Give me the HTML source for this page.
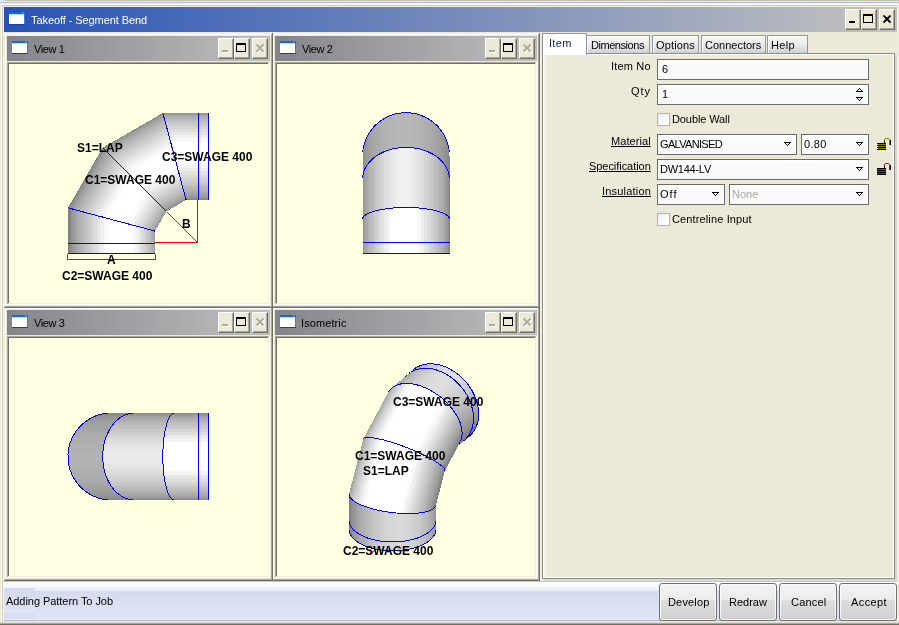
<!DOCTYPE html>
<html><head><meta charset="utf-8"><title>Takeoff - Segment Bend</title>
<style>
html,body{margin:0;padding:0}
body{width:899px;height:625px;overflow:hidden;position:relative;background:#ece9d8;font-family:"Liberation Sans",sans-serif;font-size:11px;color:#000}
body>div,body>span,body>svg{position:absolute;display:block}
.t{white-space:nowrap;height:13px;line-height:13px;font-size:11px;will-change:transform}
.u{text-decoration:underline}
.cb{box-sizing:border-box;background:#ece9d8;border:1px solid;border-color:#fff #716f64 #716f64 #fff;box-shadow:inset -1px -1px 0 #aca899}
.fld{box-sizing:border-box;border:1px solid #6a6a6a;background:linear-gradient(#fff 0,#fff 1px,#fafafa 2px,#fafafa 100%)}
.sb{box-sizing:border-box;border:1px solid #707070;border-radius:3px;background:linear-gradient(#f2f2f2 0%,#ebebeb 45%,#dddddd 46%,#cfcfcf 100%);box-shadow:inset 0 0 0 1px #fafafa}
</style></head>
<body>
<div style="left:0px;top:0px;width:899px;height:625px;background:#ece9d8;"></div>
<div style="left:0px;top:0px;width:5px;height:3px;background:#dfe3f3;"></div>
<div style="left:5px;top:0px;width:894px;height:1px;background:#c5c1b1;"></div>
<div style="left:0px;top:1px;width:899px;height:1px;background:#e4e8f6;"></div>
<div style="left:0px;top:2px;width:899px;height:1px;background:#b4bcd8;"></div>
<div style="left:0px;top:3px;width:899px;height:1px;background:#f4f2e6;"></div>
<div style="left:1px;top:4px;width:898px;height:1px;background:#fff;"></div>
<div style="left:1px;top:4px;width:1px;height:617px;background:#fff;"></div>
<div style="left:2px;top:5px;width:897px;height:1px;background:#c8c5b5;"></div>
<div style="left:2px;top:5px;width:1px;height:616px;background:#d0ccbc;"></div>
<div style="left:3px;top:6px;width:896px;height:1px;background:#f5f2e0;"></div>
<div style="left:3px;top:6px;width:1px;height:615px;background:#f5f2e0;"></div>
<div style="left:897px;top:5px;width:1px;height:616px;background:#f5f2e0;"></div>
<div style="left:898px;top:3px;width:1px;height:618px;background:#ece9d8;"></div>
<div style="left:4px;top:7px;width:893px;height:25px;background:linear-gradient(to right,#2752b6 0%,#c0c0c0 97%);"></div>
<svg style="left:9px;top:12px" width="16" height="13" viewBox="0 0 16 13" shape-rendering="crispEdges"><rect x="0" y="0" width="16" height="13" fill="#fffffb"/><rect x="0" y="0" width="16" height="2" fill="#0a6cdc"/><rect x="0" y="2" width="16" height="1" fill="#c8dcf4"/><rect x="13" y="1" width="1" height="1" fill="#f06c28"/><rect x="13" y="0" width="2" height="1" fill="#4890e0"/><rect x="15" y="2" width="1" height="10" fill="#3c7cd8"/><rect x="0" y="12" width="16" height="1" fill="#1444a4"/></svg>
<span class="t" style="left:31px;top:14px;letter-spacing:-0.08px;color:#fff">Takeoff - Segment Bend</span>
<div class="cb" style="left:845px;top:9px;width:16px;height:21px"></div>
<div style="left:849px;top:21px;width:6px;height:2px;background:#000;"></div>
<div class="cb" style="left:861px;top:9px;width:16px;height:21px"></div>
<div style="left:863px;top:14px;width:10px;height:9px;box-sizing:border-box;border:1px solid #000;border-top-width:2px"></div>
<div class="cb" style="left:879px;top:9px;width:16px;height:21px"></div>
<svg style="left:883px;top:15px" width="10" height="10" viewBox="0 0 10 10"><path d="M0.5 0.5 L7.5 7.5 M7.5 0.5 L0.5 7.5" stroke="#000" stroke-width="1.9"/></svg>
<div style="left:272px;top:307px;width:268px;height:274px;background:#ece9d8;"></div>
<div style="left:272px;top:307px;width:268px;height:1px;background:#f1efe2;"></div>
<div style="left:272px;top:307px;width:1px;height:274px;background:#f1efe2;"></div>
<div style="left:273px;top:308px;width:266px;height:1px;background:#fff;"></div>
<div style="left:273px;top:308px;width:1px;height:272px;background:#fff;"></div>
<div style="left:538px;top:308px;width:1px;height:272px;background:#aca899;"></div>
<div style="left:273px;top:579px;width:266px;height:1px;background:#aca899;"></div>
<div style="left:539px;top:307px;width:1px;height:274px;background:#716f64;"></div>
<div style="left:272px;top:580px;width:268px;height:1px;background:#716f64;"></div>
<div style="left:275px;top:310px;width:262px;height:25px;background:linear-gradient(to right,#84848c 0%,#c0c0c0 100%);"></div>
<svg style="left:280px;top:315px" width="16" height="13" viewBox="0 0 16 13" shape-rendering="crispEdges"><rect x="0" y="0" width="16" height="13" fill="#fffffb"/><rect x="0" y="0" width="16" height="2" fill="#0a6cdc"/><rect x="0" y="2" width="16" height="1" fill="#c8dcf4"/><rect x="13" y="1" width="1" height="1" fill="#f06c28"/><rect x="13" y="0" width="2" height="1" fill="#4890e0"/><rect x="15" y="2" width="1" height="10" fill="#3c7cd8"/><rect x="0" y="12" width="16" height="1" fill="#1444a4"/></svg>
<span class="t" style="left:301px;top:317px;letter-spacing:0.1px;">Isometric</span>
<div class="cb" style="left:485px;top:312px;width:16px;height:21px"></div>
<div style="left:490px;top:325px;width:6px;height:2px;background:#fff;"></div>
<div style="left:489px;top:324px;width:6px;height:2px;background:#aca899;"></div>
<div class="cb" style="left:501px;top:312px;width:16px;height:21px"></div>
<div style="left:503px;top:317px;width:10px;height:9px;box-sizing:border-box;border:1px solid #000;border-top-width:2px"></div>
<div class="cb" style="left:519px;top:312px;width:16px;height:21px"></div>
<svg style="left:523px;top:318px" width="10" height="10" viewBox="0 0 10 10"><path d="M1.5 1.5 L8.5 8.5 M8.5 1.5 L1.5 8.5" stroke="#fff" stroke-width="1.8"/><path d="M0.5 0.5 L7.5 7.5 M7.5 0.5 L0.5 7.5" stroke="#aca899" stroke-width="1.9"/></svg>
<div style="left:275px;top:336px;width:262px;height:242px;background:#ffffe1;"></div>
<div style="left:275px;top:336px;width:262px;height:1px;background:#aca899;"></div>
<div style="left:275px;top:336px;width:1px;height:242px;background:#aca899;"></div>
<div style="left:276px;top:337px;width:260px;height:1px;background:#716f64;"></div>
<div style="left:276px;top:337px;width:1px;height:240px;background:#716f64;"></div>
<div style="left:535px;top:337px;width:1px;height:240px;background:#f1efe2;"></div>
<div style="left:276px;top:576px;width:260px;height:1px;background:#f1efe2;"></div>
<div style="left:536px;top:336px;width:1px;height:242px;background:#fff;"></div>
<div style="left:275px;top:577px;width:262px;height:1px;background:#fff;"></div>
<svg style="left:277px;top:338px;will-change:transform" width="258" height="238" viewBox="277 338 258 238" shape-rendering="crispEdges" text-rendering="optimizeSpeed" font-family="Liberation Sans, sans-serif" font-weight="bold" font-size="12"><path fill="#808080" d="M465 439.5L463.2 441.4L469.9 435.6L471.9 433.6Z"/><path fill="#9d9d9d" d="M401.8 379.5L403.8 377.9L414.4 368.7L412.1 370.5Z"/><path fill="#808080" d="M466.6 437.4L465 439.5L471.9 433.6L473.6 431.3Z"/><path fill="#a4a4a4" d="M403.8 377.9L406 376.5L416.8 367.2L414.4 368.7Z"/><path fill="#808080" d="M467.9 435.1L466.6 437.4L473.6 431.3L475.1 428.8Z"/><path fill="#aaaaaa" d="M406 376.5L408.5 375.4L419.4 366L416.8 367.2Z"/><path fill="#808080" d="M468.9 432.7L467.9 435.1L475.1 428.8L476.4 426.2Z"/><path fill="#b0b0b0" d="M408.5 375.4L411.1 374.6L422.2 365L419.4 366Z"/><path fill="#808080" d="M458.2 445.4L456.6 447.1L463.2 441.4L465 439.5Z"/><path fill="#828282" d="M469.6 430L468.9 432.7L476.4 426.2L477.4 423.3Z"/><path fill="#b7b7b7" d="M411.1 374.6L413.9 374L425.1 364.3L422.2 365Z"/><path fill="#898989" d="M470.1 427.2L469.6 430L477.4 423.3L478.1 420.3Z"/><path fill="#808080" d="M459.5 443.5L458.2 445.4L465 439.5L466.6 437.4Z"/><path fill="#bdbdbd" d="M413.9 374L416.9 373.7L428.1 363.9L425.1 364.3Z"/><path fill="#8f8f8f" d="M470.3 424.3L470.1 427.2L478.1 420.3L478.5 417.2Z"/><path fill="#808080" d="M460.6 441.4L459.5 443.5L466.6 437.4L467.9 435.1Z"/><path fill="#c3c3c3" d="M416.9 373.7L419.9 373.7L431.2 363.9L428.1 363.9Z"/><path fill="#969696" d="M470.2 421.3L470.3 424.3L478.5 417.2L478.7 413.9Z"/><path fill="#9d9d9d" d="M391.4 388.5L393.2 387L403.8 377.9L401.8 379.5Z"/><path fill="#c9c9c9" d="M419.9 373.7L423.1 373.9L434.5 364.1L431.2 363.9Z"/><path fill="#808080" d="M461.4 439.2L460.6 441.4L467.9 435.1L468.9 432.7Z"/><path fill="#9c9c9c" d="M469.8 418.2L470.2 421.3L478.7 413.9L478.5 410.6Z"/><path fill="#a4a4a4" d="M393.2 387L395.3 385.8L406 376.5L403.8 377.9Z"/><path fill="#cfcfcf" d="M423.1 373.9L426.3 374.5L437.7 364.6L434.5 364.1Z"/><path fill="#a3a3a3" d="M469.1 415L469.8 418.2L478.5 410.6L478.1 407.2Z"/><path fill="#828282" d="M461.9 436.7L461.4 439.2L468.9 432.7L469.6 430Z"/><path fill="#d3d3d3" d="M426.3 374.5L429.6 375.3L441 365.4L437.7 364.6Z"/><path fill="#8d8d8d" d="M435.8 531L436 529.1L436 516.8L435.8 518.4Z"/><path fill="#a9a9a9" d="M468.1 411.8L469.1 415L478.1 407.2L477.4 403.8Z"/><path fill="#aaaaaa" d="M395.3 385.8L397.6 384.8L408.5 375.4L406 376.5Z"/><path fill="#808080" d="M349 529.1L349.2 531L349.2 513.3L349 511.8Z"/><path fill="#d8d8d8" d="M429.6 375.3L432.9 376.4L444.3 366.5L441 365.4Z"/><path fill="#898989" d="M462.1 434.2L461.9 436.7L469.6 430L470.1 427.2Z"/><path fill="#b0b0b0" d="M466.9 408.6L468.1 411.8L477.4 403.8L476.4 400.4Z"/><path fill="#808080" d="M452.7 456.1L452.1 457.4L459.5 443.5L460.6 441.4Z"/><path fill="#9e9e9e" d="M375.9 415.4L376.9 414.2L389.8 390.2L388.4 392.1Z"/><path fill="#dbdbdb" d="M432.9 376.4L436.2 377.7L447.5 367.8L444.3 366.5Z"/><path fill="#939393" d="M435.3 532.8L435.8 531L435.8 518.4L435.3 519.8Z"/><path fill="#b0b0b0" d="M397.6 384.8L400.1 384.1L411.1 374.6L408.5 375.4Z"/><path fill="#b6b6b6" d="M465.4 405.4L466.9 408.6L476.4 400.4L475.1 397Z"/><path fill="#dddddd" d="M436.2 377.7L439.4 379.3L450.8 369.5L447.5 367.8Z"/><path fill="#8f8f8f" d="M462 431.5L462.1 434.2L470.1 427.2L470.3 424.3Z"/><path fill="#bcbcbc" d="M463.7 402.3L465.4 405.4L475.1 397L473.6 393.6Z"/><path fill="#808080" d="M349.2 531L349.7 532.8L349.7 514.9L349.2 513.3Z"/><path fill="#dedede" d="M439.4 379.3L442.6 381.1L453.9 371.4L450.8 369.5Z"/><path fill="#808080" d="M453.1 454.6L452.7 456.1L460.6 441.4L461.4 439.2Z"/><path fill="#c3c3c3" d="M461.7 399.2L463.7 402.3L473.6 393.6L471.9 390.4Z"/><path fill="#a7a7a7" d="M376.9 414.2L378.2 413.2L391.4 388.5L389.8 390.2Z"/><path fill="#b7b7b7" d="M400.1 384.1L402.8 383.6L413.9 374L411.1 374.6Z"/><path fill="#dedede" d="M442.6 381.1L445.8 383.2L456.9 373.5L453.9 371.4Z"/><path fill="#c9c9c9" d="M459.5 396.2L461.7 399.2L471.9 390.4L469.9 387.2Z"/><path fill="#999999" d="M434.5 534.7L435.3 532.8L435.3 519.8L434.5 521.3Z"/><path fill="#dddddd" d="M445.8 383.2L448.8 385.4L459.8 375.9L456.9 373.5Z"/><path fill="#cecece" d="M457.1 393.3L459.5 396.2L469.9 387.2L467.6 384.1Z"/><path fill="#8d8d8d" d="M435.8 518.4L436 516.8L436 504.6L435.8 505.7Z"/><path fill="#dadada" d="M448.8 385.4L451.7 387.9L462.6 378.4L459.8 375.9Z"/><path fill="#969696" d="M461.7 428.7L462 431.5L470.3 424.3L470.2 421.3Z"/><path fill="#d3d3d3" d="M454.5 390.5L457.1 393.3L467.6 384.1L465.2 381.2Z"/><path fill="#d7d7d7" d="M451.7 387.9L454.5 390.5L465.2 381.2L462.6 378.4Z"/><path fill="#858585" d="M349.7 532.8L350.5 534.7L350.5 516.4L349.7 514.9Z"/><path fill="#bdbdbd" d="M402.8 383.6L405.6 383.4L416.9 373.7L413.9 374Z"/><path fill="#808080" d="M453.2 452.9L453.1 454.6L461.4 439.2L461.9 436.7Z"/><path fill="#b0b0b0" d="M378.2 413.2L379.7 412.3L393.2 387L391.4 388.5Z"/><path fill="#808080" d="M444.9 470.7L444.6 471.4L452.1 457.4L452.7 456.1Z"/><path fill="#9c9c9c" d="M461 425.8L461.7 428.7L470.2 421.3L469.8 418.2Z"/><path fill="#a0a0a0" d="M433.4 536.5L434.5 534.7L434.5 521.3L433.4 522.6Z"/><path fill="#939393" d="M435.3 519.8L435.8 518.4L435.8 505.7L435.3 506.8Z"/><path fill="#c3c3c3" d="M405.6 383.4L408.6 383.5L419.9 373.7L416.9 373.7Z"/><path fill="#8b8b8b" d="M350.5 534.7L351.6 536.5L351.6 517.9L350.5 516.4Z"/><path fill="#808080" d="M349 511.8L349.2 513.3L349.2 495.7L349 494.5Z"/><path fill="#848484" d="M453 451.2L453.2 452.9L461.9 436.7L462.1 434.2Z"/><path fill="#a3a3a3" d="M460.1 422.8L461 425.8L469.8 418.2L469.1 415Z"/><path fill="#bababa" d="M379.7 412.3L381.5 411.7L395.3 385.8L393.2 387Z"/><path fill="#808080" d="M444.9 470L444.9 470.7L452.7 456.1L453.1 454.6Z"/><path fill="#c9c9c9" d="M408.6 383.5L411.7 383.8L423.1 373.9L419.9 373.7Z"/><path fill="#a6a6a6" d="M431.9 538.3L433.4 536.5L433.4 522.6L431.9 524Z"/><path fill="#959595" d="M349.2 493.4L349 494.5L356.2 466.6L356.2 466.4Z"/><path fill="#9e9e9e" d="M363.4 438.7L364 438.2L376.9 414.2L375.9 415.4Z"/><path fill="#a9a9a9" d="M458.9 419.9L460.1 422.8L469.1 415L468.1 411.8Z"/><path fill="#999999" d="M434.5 521.3L435.3 519.8L435.3 506.8L434.5 507.8Z"/><path fill="#929292" d="M351.6 536.5L353.1 538.3L353.1 519.4L351.6 517.9Z"/><path fill="#808080" d="M435.3 506.8L435.8 505.7L440.4 488.2L440.1 488.4Z"/><path fill="#8c8c8c" d="M452.5 449.3L453 451.2L462.1 434.2L462 431.5Z"/><path fill="#808080" d="M349.2 513.3L349.7 514.9L349.7 496.9L349.2 495.7Z"/><path fill="#c4c4c4" d="M381.5 411.7L383.5 411.2L397.6 384.8L395.3 385.8Z"/><path fill="#cfcfcf" d="M411.7 383.8L414.9 384.4L426.3 374.5L423.1 373.9Z"/><path fill="#959595" d="M356.2 466.4L356.2 466.6L363.4 438.7L363.2 439.4Z"/><path fill="#808080" d="M440.1 488.4L440.4 488.2L444.9 470.7L444.9 470Z"/><path fill="#b0b0b0" d="M457.4 416.9L458.9 419.9L468.1 411.8L466.9 408.6Z"/><path fill="#acacac" d="M430.2 539.9L431.9 538.3L431.9 524L430.2 525.2Z"/><path fill="#808080" d="M444.5 469.1L444.9 470L453.1 454.6L453.2 452.9Z"/><path fill="#d3d3d3" d="M414.9 384.4L418.2 385.2L429.6 375.3L426.3 374.5Z"/><path fill="#9d9d9d" d="M349 494.5L349.2 495.7L356.6 467L356.2 466.6Z"/><path fill="#989898" d="M353.1 538.3L354.8 539.9L354.8 520.8L353.1 519.4Z"/><path fill="#a7a7a7" d="M364 438.2L364.9 437.8L378.2 413.2L376.9 414.2Z"/><path fill="#b6b6b6" d="M455.7 413.9L457.4 416.9L466.9 408.6L465.4 405.4Z"/><path fill="#a0a0a0" d="M433.4 522.6L434.5 521.3L434.5 507.8L433.4 508.8Z"/><path fill="#959595" d="M451.7 447.3L452.5 449.3L462 431.5L461.7 428.7Z"/><path fill="#cfcfcf" d="M383.5 411.2L385.7 410.9L400.1 384.1L397.6 384.8Z"/><path fill="#858585" d="M349.7 514.9L350.5 516.4L350.5 498.1L349.7 496.9Z"/><path fill="#d8d8d8" d="M418.2 385.2L421.5 386.2L432.9 376.4L429.6 375.3Z"/><path fill="#808080" d="M434.5 507.8L435.3 506.8L440.1 488.4L439.5 488.5Z"/><path fill="#9d9d9d" d="M356.2 466.6L356.6 467L364 438.2L363.4 438.7Z"/><path fill="#b2b2b2" d="M428.1 541.5L430.2 539.9L430.2 525.2L428.1 526.4Z"/><path fill="#bcbcbc" d="M453.7 410.9L455.7 413.9L465.4 405.4L463.7 402.3Z"/><path fill="#808080" d="M439.5 488.5L440.1 488.4L444.9 470L444.5 469.1Z"/><path fill="#848484" d="M443.9 468.1L444.5 469.1L453.2 452.9L453 451.2Z"/><path fill="#dbdbdb" d="M421.5 386.2L424.8 387.6L436.2 377.7L432.9 376.4Z"/><path fill="#9e9e9e" d="M354.8 539.9L356.9 541.5L356.9 522.2L354.8 520.8Z"/><path fill="#c3c3c3" d="M451.5 408L453.7 410.9L463.7 402.3L461.7 399.2Z"/><path fill="#9e9e9e" d="M450.6 445.2L451.7 447.3L461.7 428.7L461 425.8Z"/><path fill="#dadada" d="M385.7 410.9L388.2 410.8L402.8 383.6L400.1 384.1Z"/><path fill="#a6a6a6" d="M349.2 495.7L349.7 496.9L357.3 467.4L356.6 467Z"/><path fill="#b0b0b0" d="M364.9 437.8L366.1 437.6L379.7 412.3L378.2 413.2Z"/><path fill="#dddddd" d="M424.8 387.6L428.1 389.1L439.4 379.3L436.2 377.7Z"/><path fill="#a6a6a6" d="M431.9 524L433.4 522.6L433.4 508.8L431.9 509.7Z"/><path fill="#c9c9c9" d="M449.1 405.2L451.5 408L461.7 399.2L459.5 396.2Z"/><path fill="#8b8b8b" d="M350.5 516.4L351.6 517.9L351.6 499.3L350.5 498.1Z"/><path fill="#b8b8b8" d="M425.8 543L428.1 541.5L428.1 526.4L425.8 527.4Z"/><path fill="#dedede" d="M428.1 389.1L431.4 390.9L442.6 381.1L439.4 379.3Z"/><path fill="#848484" d="M433.4 508.8L434.5 507.8L439.5 488.5L438.6 488.5Z"/><path fill="#cecece" d="M446.5 402.4L449.1 405.2L459.5 396.2L457.1 393.3Z"/><path fill="#a6a6a6" d="M356.6 467L357.3 467.4L364.9 437.8L364 438.2Z"/><path fill="#dedede" d="M431.4 390.9L434.6 392.8L445.8 383.2L442.6 381.1Z"/><path fill="#d3d3d3" d="M443.7 399.8L446.5 402.4L457.1 393.3L454.5 390.5Z"/><path fill="#a4a4a4" d="M356.9 541.5L359.2 543L359.2 523.6L356.9 522.2Z"/><path fill="#dddddd" d="M434.6 392.8L437.8 395L448.8 385.4L445.8 383.2Z"/><path fill="#d7d7d7" d="M440.8 397.3L443.7 399.8L454.5 390.5L451.7 387.9Z"/><path fill="#a6a6a6" d="M449.2 443.1L450.6 445.2L461 425.8L460.1 422.8Z"/><path fill="#dadada" d="M437.8 395L440.8 397.3L451.7 387.9L448.8 385.4Z"/><path fill="#8c8c8c" d="M442.9 467.1L443.9 468.1L453 451.2L452.5 449.3Z"/><path fill="#848484" d="M438.6 488.5L439.5 488.5L444.5 469.1L443.9 468.1Z"/><path fill="#e5e5e5" d="M388.2 410.8L390.9 410.9L405.6 383.4L402.8 383.6Z"/><path fill="#acacac" d="M430.2 525.2L431.9 524L431.9 509.7L430.2 510.5Z"/><path fill="#bababa" d="M366.1 437.6L367.6 437.5L381.5 411.7L379.7 412.3Z"/><path fill="#bebebe" d="M423.3 544.4L425.8 543L425.8 527.4L423.3 528.4Z"/><path fill="#afafaf" d="M349.7 496.9L350.5 498.1L358.3 467.8L357.3 467.4Z"/><path fill="#929292" d="M351.6 517.9L353.1 519.4L353.1 500.5L351.6 499.3Z"/><path fill="#aaaaaa" d="M359.2 543L361.7 544.4L361.7 524.8L359.2 523.6Z"/><path fill="#8c8c8c" d="M431.9 509.7L433.4 508.8L438.6 488.5L437.4 488.4Z"/><path fill="#b0b0b0" d="M447.6 440.9L449.2 443.1L460.1 422.8L458.9 419.9Z"/><path fill="#f0f0f0" d="M390.9 410.9L393.7 411.2L408.6 383.5L405.6 383.4Z"/><path fill="#afafaf" d="M357.3 467.4L358.3 467.8L366.1 437.6L364.9 437.8Z"/><path fill="#959595" d="M441.7 465.9L442.9 467.1L452.5 449.3L451.7 447.3Z"/><path fill="#c3c3c3" d="M420.5 545.7L423.3 544.4L423.3 528.4L420.5 529.3Z"/><path fill="#8c8c8c" d="M437.4 488.4L438.6 488.5L443.9 468.1L442.9 467.1Z"/><path fill="#b2b2b2" d="M428.1 526.4L430.2 525.2L430.2 510.5L428.1 511.2Z"/><path fill="#c4c4c4" d="M367.6 437.5L369.4 437.5L383.5 411.2L381.5 411.7Z"/><path fill="#b0b0b0" d="M361.7 544.4L364.5 545.7L364.5 526L361.7 524.8Z"/><path fill="#b9b9b9" d="M350.5 498.1L351.6 499.3L359.6 468.4L358.3 467.8ZM445.7 438.7L447.6 440.9L458.9 419.9L457.4 416.9Z"/><path fill="#fbfbfb" d="M393.7 411.2L396.7 411.7L411.7 383.8L408.6 383.5Z"/><path fill="#989898" d="M353.1 519.4L354.8 520.8L354.8 501.7L353.1 500.5Z"/><path fill="#c9c9c9" d="M417.5 546.9L420.5 545.7L420.5 529.3L417.5 530Z"/><path fill="#959595" d="M430.2 510.5L431.9 509.7L437.4 488.4L435.9 488.2Z"/><path fill="#b9b9b9" d="M358.3 467.8L359.6 468.4L367.6 437.5L366.1 437.6Z"/><path fill="#9e9e9e" d="M440.2 464.7L441.7 465.9L451.7 447.3L450.6 445.2Z"/><path fill="#b6b6b6" d="M364.5 545.7L367.5 546.9L367.5 527.1L364.5 526Z"/><path fill="#c3c3c3" d="M443.5 436.5L445.7 438.7L457.4 416.9L455.7 413.9Z"/><path fill="#ffffff" d="M396.7 411.7L399.9 412.4L414.9 384.4L411.7 383.8Z"/><path fill="#959595" d="M435.9 488.2L437.4 488.4L442.9 467.1L441.7 465.9Z"/><path fill="#b8b8b8" d="M425.8 527.4L428.1 526.4L428.1 511.2L425.8 511.8Z"/><path fill="#cfcfcf" d="M369.4 437.5L371.4 437.7L385.7 410.9L383.5 411.2Z"/><path fill="#cdcdcd" d="M414.2 547.9L417.5 546.9L417.5 530L414.2 530.6Z"/><path fill="#9e9e9e" d="M354.8 520.8L356.9 522.2L356.9 502.9L354.8 501.7Z"/><path fill="#c3c3c3" d="M351.6 499.3L353.1 500.5L361.2 469L359.6 468.4Z"/><path fill="#bcbcbc" d="M367.5 546.9L370.8 547.9L370.8 528.1L367.5 527.1Z"/><path fill="#cecece" d="M441.2 434.2L443.5 436.5L455.7 413.9L453.7 410.9Z"/><path fill="#ffffff" d="M399.9 412.4L403.1 413.2L418.2 385.2L414.9 384.4Z"/><path fill="#9e9e9e" d="M428.1 511.2L430.2 510.5L435.9 488.2L434.1 487.9Z"/><path fill="#d1d1d1" d="M410.9 548.8L414.2 547.9L414.2 530.6L410.9 531.1Z"/><path fill="#a6a6a6" d="M438.4 463.4L440.2 464.7L450.6 445.2L449.2 443.1Z"/><path fill="#c3c3c3" d="M359.6 468.4L361.2 469L369.4 437.5L367.6 437.5Z"/><path fill="#c2c2c2" d="M370.8 547.9L374.1 548.8L374.1 529L370.8 528.1Z"/><path fill="#bebebe" d="M423.3 528.4L425.8 527.4L425.8 511.8L423.3 512.3Z"/><path fill="#d9d9d9" d="M438.6 432L441.2 434.2L453.7 410.9L451.5 408Z"/><path fill="#ffffff" d="M403.1 413.2L406.4 414.2L421.5 386.2L418.2 385.2Z"/><path fill="#9e9e9e" d="M434.1 487.9L435.9 488.2L441.7 465.9L440.2 464.7Z"/><path fill="#dadada" d="M371.4 437.7L373.7 437.9L388.2 410.8L385.7 410.9Z"/><path fill="#a4a4a4" d="M356.9 522.2L359.2 523.6L359.2 504.1L356.9 502.9Z"/><path fill="#d5d5d5" d="M407.4 549.5L410.9 548.8L410.9 531.1L407.4 531.5Z"/><path fill="#cdcdcd" d="M353.1 500.5L354.8 501.7L363.1 469.7L361.2 469Z"/><path fill="#c7c7c7" d="M374.1 548.8L377.6 549.5L377.6 529.8L374.1 529Z"/><path fill="#e4e4e4" d="M435.9 429.8L438.6 432L451.5 408L449.1 405.2Z"/><path fill="#ffffff" d="M406.4 414.2L409.8 415.5L424.8 387.6L421.5 386.2Z"/><path fill="#d7d7d7" d="M403.8 550.1L407.4 549.5L407.4 531.5L403.8 531.8Z"/><path fill="#a6a6a6" d="M425.8 511.8L428.1 511.2L434.1 487.9L432.1 487.6Z"/><path fill="#b0b0b0" d="M436.3 462L438.4 463.4L449.2 443.1L447.6 440.9Z"/><path fill="#cccccc" d="M377.6 549.5L381.2 550.1L381.2 530.5L377.6 529.8Z"/><path fill="#c3c3c3" d="M420.5 529.3L423.3 528.4L423.3 512.3L420.5 512.8Z"/><path fill="#f0f0f0" d="M432.9 427.7L435.9 429.8L449.1 405.2L446.5 402.4Z"/><path fill="#ffffff" d="M409.8 415.5L413.2 416.8L428.1 389.1L424.8 387.6Z"/><path fill="#d8d8d8" d="M400.1 550.5L403.8 550.1L403.8 531.8L400.1 531.9Z"/><path fill="#cdcdcd" d="M361.2 469L363.1 469.7L371.4 437.7L369.4 437.5Z"/><path fill="#aaaaaa" d="M359.2 523.6L361.7 524.8L361.7 505.2L359.2 504.1Z"/><path fill="#d0d0d0" d="M381.2 550.1L384.9 550.5L384.9 531L381.2 530.5Z"/><path fill="#e5e5e5" d="M373.7 437.9L376.2 438.4L390.9 410.9L388.2 410.8Z"/><path fill="#d9d9d9" d="M396.3 550.7L400.1 550.5L400.1 531.9L396.3 531.9Z"/><path fill="#fafafa" d="M429.9 425.6L432.9 427.7L446.5 402.4L443.7 399.8Z"/><path fill="#ffffff" d="M413.2 416.8L416.7 418.3L431.4 390.9L428.1 389.1Z"/><path fill="#a6a6a6" d="M432.1 487.6L434.1 487.9L440.2 464.7L438.4 463.4Z"/><path fill="#d4d4d4" d="M384.9 550.5L388.7 550.7L388.7 531.4L384.9 531Z"/><path fill="#d8d8d8" d="M392.5 550.8L396.3 550.7L396.3 531.9L392.5 531.7Z"/><path fill="#d6d6d6" d="M388.7 550.7L392.5 550.8L392.5 531.7L388.7 531.4Z"/><path fill="#ffffff" d="M426.7 423.6L429.9 425.6L443.7 399.8L440.8 397.3Z"/><path fill="#d8d8d8" d="M354.8 501.7L356.9 502.9L365.3 470.4L363.1 469.7Z"/><path fill="#ffffff" d="M416.7 418.3L420.1 420L434.6 392.8L431.4 390.9ZM423.4 421.8L426.7 423.6L440.8 397.3L437.8 395ZM420.1 420L423.4 421.8L437.8 395L434.6 392.8Z"/><path fill="#c9c9c9" d="M417.5 530L420.5 529.3L420.5 512.8L417.5 513.1Z"/><path fill="#b9b9b9" d="M434 460.5L436.3 462L447.6 440.9L445.7 438.7Z"/><path fill="#afafaf" d="M423.3 512.3L425.8 511.8L432.1 487.6L429.8 487.2Z"/><path fill="#b0b0b0" d="M361.7 524.8L364.5 526L364.5 506.3L361.7 505.2Z"/><path fill="#f0f0f0" d="M376.2 438.4L378.9 438.9L393.7 411.2L390.9 410.9Z"/><path fill="#d8d8d8" d="M363.1 469.7L365.3 470.4L373.7 437.9L371.4 437.7Z"/><path fill="#afafaf" d="M429.8 487.2L432.1 487.6L438.4 463.4L436.3 462Z"/><path fill="#e3e3e3" d="M356.9 502.9L359.2 504.1L367.7 471.2L365.3 470.4Z"/><path fill="#cdcdcd" d="M414.2 530.6L417.5 530L417.5 513.1L414.2 513.4Z"/><path fill="#c3c3c3" d="M431.4 459.1L434 460.5L445.7 438.7L443.5 436.5Z"/><path fill="#b6b6b6" d="M364.5 526L367.5 527.1L367.5 507.3L364.5 506.3Z"/><path fill="#b9b9b9" d="M420.5 512.8L423.3 512.3L429.8 487.2L427.2 486.7Z"/><path fill="#fbfbfb" d="M378.9 438.9L381.8 439.6L396.7 411.7L393.7 411.2Z"/><path fill="#e3e3e3" d="M365.3 470.4L367.7 471.2L376.2 438.4L373.7 437.9Z"/><path fill="#d1d1d1" d="M410.9 531.1L414.2 530.6L414.2 513.4L410.9 513.5Z"/><path fill="#b9b9b9" d="M427.2 486.7L429.8 487.2L436.3 462L434 460.5Z"/><path fill="#bcbcbc" d="M367.5 527.1L370.8 528.1L370.8 508.3L367.5 507.3Z"/><path fill="#eeeeee" d="M359.2 504.1L361.7 505.2L370.3 472.1L367.7 471.2Z"/><path fill="#cecece" d="M428.7 457.6L431.4 459.1L443.5 436.5L441.2 434.2Z"/><path fill="#ffffff" d="M381.8 439.6L384.9 440.4L399.9 412.4L396.7 411.7Z"/><path fill="#c3c3c3" d="M417.5 513.1L420.5 512.8L427.2 486.7L424.4 486.1Z"/><path fill="#d5d5d5" d="M407.4 531.5L410.9 531.1L410.9 513.5L407.4 513.5Z"/><path fill="#c2c2c2" d="M370.8 528.1L374.1 529L374.1 509.2L370.8 508.3Z"/><path fill="#eeeeee" d="M367.7 471.2L370.3 472.1L378.9 438.9L376.2 438.4Z"/><path fill="#d9d9d9" d="M425.7 456L428.7 457.6L441.2 434.2L438.6 432Z"/><path fill="#f9f9f9" d="M361.7 505.2L364.5 506.3L373.2 472.9L370.3 472.1Z"/><path fill="#c3c3c3" d="M424.4 486.1L427.2 486.7L434 460.5L431.4 459.1Z"/><path fill="#d7d7d7" d="M403.8 531.8L407.4 531.5L407.4 513.5L403.8 513.5Z"/><path fill="#ffffff" d="M384.9 440.4L388.1 441.3L403.1 413.2L399.9 412.4Z"/><path fill="#c7c7c7" d="M374.1 529L377.6 529.8L377.6 510.1L374.1 509.2Z"/><path fill="#cdcdcd" d="M414.2 513.4L417.5 513.1L424.4 486.1L421.5 485.5Z"/><path fill="#d8d8d8" d="M400.1 531.9L403.8 531.8L403.8 513.5L400.1 513.3Z"/><path fill="#e4e4e4" d="M422.6 454.5L425.7 456L438.6 432L435.9 429.8Z"/><path fill="#cccccc" d="M377.6 529.8L381.2 530.5L381.2 510.8L377.6 510.1Z"/><path fill="#ffffff" d="M388.1 441.3L391.4 442.3L406.4 414.2L403.1 413.2Z"/><path fill="#f9f9f9" d="M370.3 472.1L373.2 472.9L381.8 439.6L378.9 438.9Z"/><path fill="#d9d9d9" d="M396.3 531.9L400.1 531.9L400.1 513.3L396.3 513Z"/><path fill="#ffffff" d="M364.5 506.3L367.5 507.3L376.2 473.8L373.2 472.9Z"/><path fill="#d0d0d0" d="M381.2 530.5L384.9 531L384.9 511.5L381.2 510.8Z"/><path fill="#cdcdcd" d="M421.5 485.5L424.4 486.1L431.4 459.1L428.7 457.6Z"/><path fill="#d8d8d8" d="M392.5 531.7L396.3 531.9L396.3 513L392.5 512.6Z"/><path fill="#d4d4d4" d="M384.9 531L388.7 531.4L388.7 512.1L384.9 511.5Z"/><path fill="#d6d6d6" d="M388.7 531.4L392.5 531.7L392.5 512.6L388.7 512.1Z"/><path fill="#f0f0f0" d="M419.4 453L422.6 454.5L435.9 429.8L432.9 427.7Z"/><path fill="#d8d8d8" d="M410.9 513.5L414.2 513.4L421.5 485.5L418.3 484.8Z"/><path fill="#ffffff" d="M391.4 442.3L394.9 443.3L409.8 415.5L406.4 414.2Z"/><path fill="#fafafa" d="M416 451.5L419.4 453L432.9 427.7L429.9 425.6Z"/><path fill="#ffffff" d="M367.5 507.3L370.8 508.3L379.4 474.8L376.2 473.8ZM373.2 472.9L376.2 473.8L384.9 440.4L381.8 439.6ZM394.9 443.3L398.4 444.5L413.2 416.8L409.8 415.5Z"/><path fill="#d8d8d8" d="M418.3 484.8L421.5 485.5L428.7 457.6L425.7 456Z"/><path fill="#e3e3e3" d="M407.4 513.5L410.9 513.5L418.3 484.8L415 484Z"/><path fill="#ffffff" d="M412.6 450L416 451.5L429.9 425.6L426.7 423.6ZM398.4 444.5L401.9 445.8L416.7 418.3L413.2 416.8ZM409.1 448.5L412.6 450L426.7 423.6L423.4 421.8ZM401.9 445.8L405.5 447.1L420.1 420L416.7 418.3ZM405.5 447.1L409.1 448.5L423.4 421.8L420.1 420ZM370.8 508.3L374.1 509.2L382.8 475.7L379.4 474.8ZM376.2 473.8L379.4 474.8L388.1 441.3L384.9 440.4Z"/><path fill="#eeeeee" d="M403.8 513.5L407.4 513.5L415 484L411.6 483.2Z"/><path fill="#e3e3e3" d="M415 484L418.3 484.8L425.7 456L422.6 454.5Z"/><path fill="#ffffff" d="M374.1 509.2L377.6 510.1L386.3 476.7L382.8 475.7Z"/><path fill="#f9f9f9" d="M400.1 513.3L403.8 513.5L411.6 483.2L408 482.4Z"/><path fill="#ffffff" d="M379.4 474.8L382.8 475.7L391.4 442.3L388.1 441.3Z"/><path fill="#eeeeee" d="M411.6 483.2L415 484L422.6 454.5L419.4 453Z"/><path fill="#ffffff" d="M377.6 510.1L381.2 510.8L389.8 477.7L386.3 476.7ZM396.3 513L400.1 513.3L408 482.4L404.4 481.5ZM381.2 510.8L384.9 511.5L393.4 478.7L389.8 477.7ZM392.5 512.6L396.3 513L404.4 481.5L400.8 480.6ZM382.8 475.7L386.3 476.7L394.9 443.3L391.4 442.3ZM384.9 511.5L388.7 512.1L397.1 479.6L393.4 478.7ZM388.7 512.1L392.5 512.6L400.8 480.6L397.1 479.6Z"/><path fill="#f9f9f9" d="M408 482.4L411.6 483.2L419.4 453L416 451.5Z"/><path fill="#ffffff" d="M386.3 476.7L389.8 477.7L398.4 444.5L394.9 443.3ZM404.4 481.5L408 482.4L416 451.5L412.6 450ZM389.8 477.7L393.4 478.7L401.9 445.8L398.4 444.5ZM400.8 480.6L404.4 481.5L412.6 450L409.1 448.5ZM393.4 478.7L397.1 479.6L405.5 447.1L401.9 445.8ZM397.1 479.6L400.8 480.6L409.1 448.5L405.5 447.1Z"/><path d="M370.8 547.9L372.4 548.4L374.1 548.8L375.9 549.2L377.6 549.5L379.4 549.8L381.2 550.1L383.1 550.3L384.9 550.5L386.8 550.6L388.7 550.7L390.6 550.8L392.5 550.8L394.4 550.8L396.3 550.7L398.2 550.6L400.1 550.5L401.9 550.3L403.8 550.1L405.6 549.8L407.4 549.5L409.1 549.2L410.9 548.8L412.6 548.4L414.2 547.9L415.9 547.4L417.5 546.9L419 546.3L420.5 545.7L421.9 545.1L423.3 544.4L424.6 543.8L425.8 543L427 542.3L428.1 541.5L429.2 540.8L430.2 539.9L431.1 539.1L431.9 538.3L432.7 537.4L433.4 536.5L434 535.6L434.5 534.7L435 533.8L435.3 532.8L435.6 531.9L435.8 531L436 530M349 530L349.2 531L349.4 531.9L349.7 532.8L350 533.8L350.5 534.7L351 535.6L351.6 536.5L352.3 537.4L353.1 538.3L353.9 539.1L354.8 539.9L355.8 540.8L356.9 541.5L358 542.3L359.2 543L360.4 543.8L361.7 544.4L363.1 545.1L364.5 545.7L366 546.3L367.5 546.9L369.1 547.4L370.8 547.9M370.8 539L372.4 539.4L374.1 539.9L375.9 540.2L377.6 540.6L379.4 540.9L381.2 541.2L383.1 541.4L384.9 541.6L386.8 541.7L388.7 541.8L390.6 541.9L392.5 541.9L394.4 541.9L396.3 541.8L398.2 541.7L400.1 541.6L401.9 541.4L403.8 541.2L405.6 540.9L407.4 540.6L409.1 540.2L410.9 539.9L412.6 539.4L414.2 539L415.9 538.5L417.5 538L419 537.4L420.5 536.8L421.9 536.2L423.3 535.5L424.6 534.8L425.8 534.1L427 533.4L428.1 532.6L429.2 531.8L430.2 531L431.1 530.2L431.9 529.3L432.7 528.5L433.4 527.6L434 526.7L434.5 525.8L435 524.9L435.3 523.9L435.6 523L435.8 522L436 521.1M349 521.1L349.2 522L349.4 523L349.7 523.9L350 524.9L350.5 525.8L351 526.7L351.6 527.6L352.3 528.5L353.1 529.3L353.9 530.2L354.8 531L355.8 531.8L356.9 532.6L358 533.4L359.2 534.1L360.4 534.8L361.7 535.5L363.1 536.2L364.5 536.8L366 537.4L367.5 538L369.1 538.5L370.8 539M370.8 508.3L372.4 508.8L374.1 509.2L375.9 509.7L377.6 510.1L379.4 510.5L381.2 510.8L383.1 511.2L384.9 511.5L386.8 511.8L388.7 512.1L390.6 512.4L392.5 512.6L394.4 512.8L396.3 513L398.2 513.1L400.1 513.3L401.9 513.4L403.8 513.5L405.6 513.5L407.4 513.5L409.1 513.5L410.9 513.5L412.6 513.5L414.2 513.4L415.9 513.3L417.5 513.1L419 513L420.5 512.8L421.9 512.6L423.3 512.3L424.6 512.1L425.8 511.8L427 511.5L428.1 511.2L429.2 510.8L430.2 510.5L431.1 510.1L431.9 509.7L432.7 509.2L433.4 508.8L434 508.3L434.5 507.8L435 507.3L435.3 506.8L435.6 506.3L435.8 505.7M349 494L349 494.5L349 495.1L349.2 495.7L349.4 496.3L349.7 496.9L350 497.5L350.5 498.1L351 498.7L351.6 499.3L352.3 499.9L353.1 500.5L353.9 501.1L354.8 501.7L355.8 502.3L356.9 502.9L358 503.5L359.2 504.1L360.4 504.6L361.7 505.2L363.1 505.8L364.5 506.3L366 506.8L367.5 507.3L369.1 507.8L370.8 508.3M388.1 441.3L389.8 441.7L391.4 442.3L393.2 442.8L394.9 443.3L396.6 443.9L398.4 444.5L400.2 445.2L401.9 445.8L403.7 446.5L405.5 447.1L407.3 447.8L409.1 448.5L410.8 449.3L412.6 450L414.3 450.7L416 451.5L417.7 452.2L419.4 453L421 453.7L422.6 454.5L424.2 455.3L425.7 456L427.2 456.8L428.7 457.6L430.1 458.3L431.4 459.1L432.7 459.8L434 460.5L435.2 461.3L436.3 462L437.4 462.7L438.4 463.4L439.3 464L440.2 464.7L441 465.3L441.7 465.9L442.4 466.5L442.9 467.1L443.4 467.6L443.9 468.1L444.2 468.6L444.5 469.1L444.7 469.6L444.9 470L444.9 470.4L444.9 470.7M363.2 439.4L363.3 439L363.4 438.7L363.7 438.5L364 438.2L364.4 438L364.9 437.8L365.5 437.7L366.1 437.6L366.8 437.5L367.6 437.5L368.5 437.5L369.4 437.5L370.4 437.6L371.4 437.7L372.5 437.8L373.7 437.9L374.9 438.1L376.2 438.4L377.5 438.6L378.9 438.9L380.3 439.2L381.8 439.6L383.3 439.9L384.9 440.4L386.5 440.8L388.1 441.3M418.2 385.2L419.8 385.7L421.5 386.2L423.1 386.9L424.8 387.6L426.4 388.3L428.1 389.1L429.7 390L431.4 390.9L433 391.8L434.6 392.8L436.2 393.9L437.8 395L439.3 396.1L440.8 397.3L442.3 398.5L443.7 399.8L445.1 401.1L446.5 402.4L447.8 403.8L449.1 405.2L450.3 406.6L451.5 408L452.6 409.4L453.7 410.9L454.7 412.4L455.7 413.9L456.6 415.4L457.4 416.9L458.2 418.4L458.9 419.9L459.5 421.4L460.1 422.8L460.6 424.3L461 425.8L461.4 427.2L461.7 428.7L461.9 430.1L462 431.5L462.1 432.8L462.1 434.2L462 435.5L461.9 436.7L461.7 438L461.4 439.2L461 440.3L460.6 441.4M460.1 442.5L459.5 443.5L458.9 444.5M388.4 392.1L389.1 391.1L389.8 390.2L390.5 389.3L391.4 388.5L392.3 387.7L393.2 387L394.2 386.4L395.3 385.8L396.4 385.3L397.6 384.8L398.8 384.4L400.1 384.1L401.4 383.8L402.8 383.6L404.2 383.5L405.6 383.4L407.1 383.4L408.6 383.5L410.1 383.6L411.7 383.8L413.3 384L414.9 384.4L416.5 384.7L418.2 385.2M441 365.4L442.6 365.9L444.3 366.5L445.9 367.1L447.5 367.8L449.2 368.6L450.8 369.5L452.3 370.4L453.9 371.4L455.4 372.4L456.9 373.5L458.4 374.7L459.8 375.9L461.2 377.1L462.6 378.4L463.9 379.8L465.2 381.2L466.5 382.6L467.6 384.1L468.8 385.6L469.9 387.2L470.9 388.8L471.9 390.4L472.8 392L473.6 393.6L474.4 395.3L475.1 397L475.8 398.7L476.4 400.4L476.9 402.1L477.4 403.8L477.8 405.5L478.1 407.2L478.3 408.9L478.5 410.6L478.6 412.3L478.7 413.9L478.6 415.6L478.5 417.2L478.3 418.8L478.1 420.3L477.8 421.8L477.4 423.3L476.9 424.8L476.4 426.2L475.8 427.5L475.1 428.8L474.4 430.1L473.6 431.3L472.8 432.5L471.9 433.6L470.9 434.6L469.9 435.6L468.8 436.5M413.2 369.6L414.4 368.7L415.5 367.9L416.8 367.2L418.1 366.6L419.4 366L420.8 365.4L422.2 365L423.6 364.6L425.1 364.3L426.6 364.1L428.1 363.9L429.7 363.9L431.2 363.9L432.8 363.9L434.5 364.1L436.1 364.3L437.7 364.6L439.4 364.9L441 365.4M435.9 369.8L437.5 370.4L439.1 370.9L440.8 371.6L442.4 372.3L444 373.1L445.6 373.9L447.2 374.9L448.7 375.8L450.3 376.9L451.8 378L453.2 379.1L454.7 380.3L456.1 381.6L457.5 382.9L458.8 384.3L460.1 385.7L461.3 387.1L462.5 388.6L463.6 390.1L464.7 391.6L465.7 393.2L466.7 394.8L467.6 396.4L468.5 398.1L469.3 399.8L470 401.5L470.7 403.1L471.3 404.9L471.8 406.6L472.2 408.3L472.6 410L472.9 411.7L473.2 413.4L473.4 415.1L473.5 416.7L473.5 418.4L473.5 420L473.4 421.6L473.2 423.2L472.9 424.8L472.6 426.3L472.2 427.8L471.8 429.2L471.3 430.6L470.7 432L470 433.3L469.3 434.6L468.5 435.8L467.6 436.9L466.7 438L465.7 439.1L464.7 440.1L463.6 441M405 377L406 376L407 375M409.2 373.2L410.4 372.4M411.6 371.7L412.9 371L414.2 370.4L415.6 369.9L417 369.5L418.5 369.1L419.9 368.8L421.4 368.6L423 368.4L424.5 368.3L426.1 368.3L427.7 368.4L429.3 368.5L430.9 368.7L432.6 369L434.2 369.4L435.8 369.8" stroke="#0000ff" stroke-width="1" fill="none"/><path d="M370 549h1v1h-1zM373 551h1v1h-1zM370 552h1v1h-1z" fill="#f00"/><text x="393" y="406">C3=SWAGE 400</text><text x="355" y="460">C1=SWAGE 400</text><text x="363" y="475">S1=LAP</text><text x="343" y="555">C2=SWAGE 400</text></svg>
<div style="left:4px;top:307px;width:269px;height:274px;background:#ece9d8;"></div>
<div style="left:4px;top:307px;width:269px;height:1px;background:#f1efe2;"></div>
<div style="left:4px;top:307px;width:1px;height:274px;background:#f1efe2;"></div>
<div style="left:5px;top:308px;width:267px;height:1px;background:#fff;"></div>
<div style="left:5px;top:308px;width:1px;height:272px;background:#fff;"></div>
<div style="left:271px;top:308px;width:1px;height:272px;background:#aca899;"></div>
<div style="left:5px;top:579px;width:267px;height:1px;background:#aca899;"></div>
<div style="left:272px;top:307px;width:1px;height:274px;background:#716f64;"></div>
<div style="left:4px;top:580px;width:269px;height:1px;background:#716f64;"></div>
<div style="left:7px;top:310px;width:263px;height:25px;background:linear-gradient(to right,#84848c 0%,#c0c0c0 100%);"></div>
<svg style="left:12px;top:315px" width="16" height="13" viewBox="0 0 16 13" shape-rendering="crispEdges"><rect x="0" y="0" width="16" height="13" fill="#fffffb"/><rect x="0" y="0" width="16" height="2" fill="#0a6cdc"/><rect x="0" y="2" width="16" height="1" fill="#c8dcf4"/><rect x="13" y="1" width="1" height="1" fill="#f06c28"/><rect x="13" y="0" width="2" height="1" fill="#4890e0"/><rect x="15" y="2" width="1" height="10" fill="#3c7cd8"/><rect x="0" y="12" width="16" height="1" fill="#1444a4"/></svg>
<span class="t" style="left:34px;top:317px;letter-spacing:-0.4px;">View 3</span>
<div class="cb" style="left:218px;top:312px;width:16px;height:21px"></div>
<div style="left:223px;top:325px;width:6px;height:2px;background:#fff;"></div>
<div style="left:222px;top:324px;width:6px;height:2px;background:#aca899;"></div>
<div class="cb" style="left:234px;top:312px;width:16px;height:21px"></div>
<div style="left:236px;top:317px;width:10px;height:9px;box-sizing:border-box;border:1px solid #000;border-top-width:2px"></div>
<div class="cb" style="left:252px;top:312px;width:16px;height:21px"></div>
<svg style="left:256px;top:318px" width="10" height="10" viewBox="0 0 10 10"><path d="M1.5 1.5 L8.5 8.5 M8.5 1.5 L1.5 8.5" stroke="#fff" stroke-width="1.8"/><path d="M0.5 0.5 L7.5 7.5 M7.5 0.5 L0.5 7.5" stroke="#aca899" stroke-width="1.9"/></svg>
<div style="left:7px;top:336px;width:263px;height:242px;background:#ffffe1;"></div>
<div style="left:7px;top:336px;width:263px;height:1px;background:#aca899;"></div>
<div style="left:7px;top:336px;width:1px;height:242px;background:#aca899;"></div>
<div style="left:8px;top:337px;width:261px;height:1px;background:#716f64;"></div>
<div style="left:8px;top:337px;width:1px;height:240px;background:#716f64;"></div>
<div style="left:268px;top:337px;width:1px;height:240px;background:#f1efe2;"></div>
<div style="left:8px;top:576px;width:261px;height:1px;background:#f1efe2;"></div>
<div style="left:269px;top:336px;width:1px;height:242px;background:#fff;"></div>
<div style="left:7px;top:577px;width:263px;height:1px;background:#fff;"></div>
<svg style="left:9px;top:338px;will-change:transform" width="259" height="238" viewBox="9 338 259 238" shape-rendering="crispEdges" text-rendering="optimizeSpeed" font-family="Liberation Sans, sans-serif" font-weight="bold" font-size="12"><path fill="#828282" d="M111.5 413L107.7 413.2L131.8 413.2L134.5 413ZM107.7 499.8L111.5 500L134.5 500L131.8 499.8Z"/><path fill="#868686" d="M107.7 413.2L103.9 413.7L129 413.7L131.8 413.2ZM103.9 499.3L107.7 499.8L131.8 499.8L129 499.3Z"/><path fill="#8a8a8a" d="M103.9 413.7L100.2 414.5L126.3 414.5L129 413.7ZM100.2 498.5L103.9 499.3L129 499.3L126.3 498.5Z"/><path fill="#8e8e8e" d="M100.2 414.5L96.6 415.6L123.7 415.6L126.3 414.5ZM96.6 497.4L100.2 498.5L126.3 498.5L123.7 497.4Z"/><path fill="#939393" d="M96.6 415.6L93.1 417.1L121.1 417.1L123.7 415.6ZM93.1 495.9L96.6 497.4L123.7 497.4L121.1 495.9Z"/><path fill="#979797" d="M89.8 494.2L93.1 495.9L121.1 495.9L118.6 494.2ZM93.1 417.1L89.8 418.8L118.6 418.8L121.1 417.1Z"/><path fill="#9a9a9a" d="M86.5 492.1L89.8 494.2L118.6 494.2L116.3 492.1ZM89.8 418.8L86.5 420.9L116.3 420.9L118.6 418.8Z"/><path fill="#9e9e9e" d="M83.5 489.8L86.5 492.1L116.3 492.1L114.1 489.8ZM86.5 420.9L83.5 423.2L114.1 423.2L116.3 420.9Z"/><path fill="#a1a1a1" d="M80.7 487.3L83.5 489.8L114.1 489.8L112 487.3ZM83.5 423.2L80.7 425.7L112 425.7L114.1 423.2Z"/><path fill="#a4a4a4" d="M80.7 425.7L78.2 428.5L110.1 428.5L112 425.7ZM78.2 484.5L80.7 487.3L112 487.3L110.1 484.5Z"/><path fill="#a7a7a7" d="M78.2 428.5L75.9 431.5L108.5 431.5L110.1 428.5ZM75.9 481.5L78.2 484.5L110.1 484.5L108.5 481.5Z"/><path fill="#aaaaaa" d="M75.9 431.5L73.8 434.8L107 434.8L108.5 431.5ZM73.8 478.2L75.9 481.5L108.5 481.5L107 478.2Z"/><path fill="#acacac" d="M72.1 474.9L73.8 478.2L107 478.2L105.7 474.9ZM73.8 434.8L72.1 438.1L105.7 438.1L107 434.8Z"/><path fill="#aeaeae" d="M72.1 438.1L70.6 441.6L104.6 441.6L105.7 438.1ZM70.6 471.4L72.1 474.9L105.7 474.9L104.6 471.4Z"/><path fill="#b0b0b0" d="M69.5 467.8L70.6 471.4L104.6 471.4L103.8 467.8ZM70.6 441.6L69.5 445.2L103.8 445.2L104.6 441.6Z"/><path fill="#b1b1b1" d="M68.7 464.1L69.5 467.8L103.8 467.8L103.2 464.1ZM69.5 445.2L68.7 448.9L103.2 448.9L103.8 445.2Z"/><path fill="#b2b2b2" d="M68.7 448.9L68.2 452.7L102.8 452.7L103.2 448.9ZM68.2 460.3L68.7 464.1L103.2 464.1L102.8 460.3Z"/><path fill="#b3b3b3" d="M68 456.5L68.2 460.3L102.8 460.3L102.7 456.5ZM68.2 452.7L68 456.5L102.7 456.5L102.8 452.7Z"/><path fill="#838383" d="M134.5 413L131.8 413.2L173.4 413.2L174.5 413ZM131.8 499.8L134.5 500L174.5 500L173.4 499.8Z"/><path fill="#8a8a8a" d="M131.8 413.2L129 413.7L172.4 413.7L173.4 413.2ZM129 499.3L131.8 499.8L173.4 499.8L172.4 499.3Z"/><path fill="#919191" d="M129 413.7L126.3 414.5L171.4 414.5L172.4 413.7ZM126.3 498.5L129 499.3L172.4 499.3L171.4 498.5Z"/><path fill="#989898" d="M126.3 414.5L123.7 415.6L170.5 415.6L171.4 414.5ZM123.7 497.4L126.3 498.5L171.4 498.5L170.5 497.4Z"/><path fill="#838383" d="M174.5 413L173.4 413.2L208.5 413.2L208.5 413ZM173.4 499.8L174.5 500L208.5 500L208.5 499.8Z"/><path fill="#9f9f9f" d="M123.7 415.6L121.1 417.1L169.5 417.1L170.5 415.6ZM121.1 495.9L123.7 497.4L170.5 497.4L169.5 495.9Z"/><path fill="#8b8b8b" d="M173.4 413.2L172.4 413.7L208.5 413.7L208.5 413.2ZM172.4 499.3L173.4 499.8L208.5 499.8L208.5 499.3Z"/><path fill="#a5a5a5" d="M121.1 417.1L118.6 418.8L168.6 418.8L169.5 417.1ZM118.6 494.2L121.1 495.9L169.5 495.9L168.6 494.2Z"/><path fill="#acacac" d="M116.3 492.1L118.6 494.2L168.6 494.2L167.8 492.1ZM118.6 418.8L116.3 420.9L167.8 420.9L168.6 418.8Z"/><path fill="#939393" d="M172.4 413.7L171.4 414.5L208.5 414.5L208.5 413.7ZM171.4 498.5L172.4 499.3L208.5 499.3L208.5 498.5Z"/><path fill="#b3b3b3" d="M114.1 489.8L116.3 492.1L167.8 492.1L167 489.8ZM116.3 420.9L114.1 423.2L167 423.2L167.8 420.9Z"/><path fill="#9b9b9b" d="M171.4 414.5L170.5 415.6L208.5 415.6L208.5 414.5ZM170.5 497.4L171.4 498.5L208.5 498.5L208.5 497.4Z"/><path fill="#b9b9b9" d="M112 487.3L114.1 489.8L167 489.8L166.2 487.3ZM114.1 423.2L112 425.7L166.2 425.7L167 423.2Z"/><path fill="#c0c0c0" d="M112 425.7L110.1 428.5L165.5 428.5L166.2 425.7ZM110.1 484.5L112 487.3L166.2 487.3L165.5 484.5Z"/><path fill="#a3a3a3" d="M169.5 495.9L170.5 497.4L208.5 497.4L208.5 495.9ZM170.5 415.6L169.5 417.1L208.5 417.1L208.5 415.6Z"/><path fill="#c7c7c7" d="M110.1 428.5L108.5 431.5L164.9 431.5L165.5 428.5ZM108.5 481.5L110.1 484.5L165.5 484.5L164.9 481.5Z"/><path fill="#aaaaaa" d="M169.5 417.1L168.6 418.8L208.5 418.8L208.5 417.1ZM168.6 494.2L169.5 495.9L208.5 495.9L208.5 494.2Z"/><path fill="#cecece" d="M108.5 431.5L107 434.8L164.4 434.8L164.9 431.5ZM107 478.2L108.5 481.5L164.9 481.5L164.4 478.2Z"/><path fill="#d4d4d4" d="M107 434.8L105.7 438.1L163.9 438.1L164.4 434.8ZM105.7 474.9L107 478.2L164.4 478.2L163.9 474.9Z"/><path fill="#dbdbdb" d="M104.6 471.4L105.7 474.9L163.9 474.9L163.5 471.4ZM105.7 438.1L104.6 441.6L163.5 441.6L163.9 438.1Z"/><path fill="#b2b2b2" d="M167.8 492.1L168.6 494.2L208.5 494.2L208.5 492.1ZM168.6 418.8L167.8 420.9L208.5 420.9L208.5 418.8Z"/><path fill="#e0e0e0" d="M103.8 467.8L104.6 471.4L163.5 471.4L163.2 467.8ZM104.6 441.6L103.8 445.2L163.2 445.2L163.5 441.6Z"/><path fill="#e5e5e5" d="M103.8 445.2L103.2 448.9L163 448.9L163.2 445.2ZM103.2 464.1L103.8 467.8L163.2 467.8L163 464.1Z"/><path fill="#e9e9e9" d="M102.8 460.3L103.2 464.1L163 464.1L162.8 460.3ZM103.2 448.9L102.8 452.7L162.8 452.7L163 448.9Z"/><path fill="#eaeaea" d="M102.7 456.5L102.8 460.3L162.8 460.3L162.8 456.5ZM102.8 452.7L102.7 456.5L162.8 456.5L162.8 452.7Z"/><path fill="#bababa" d="M167 489.8L167.8 492.1L208.5 492.1L208.5 489.8ZM167.8 420.9L167 423.2L208.5 423.2L208.5 420.9Z"/><path fill="#c2c2c2" d="M167 423.2L166.2 425.7L208.5 425.7L208.5 423.2ZM166.2 487.3L167 489.8L208.5 489.8L208.5 487.3Z"/><path fill="#cbcbcb" d="M166.2 425.7L165.5 428.5L208.5 428.5L208.5 425.7ZM165.5 484.5L166.2 487.3L208.5 487.3L208.5 484.5Z"/><path fill="#d5d5d5" d="M165.5 428.5L164.9 431.5L208.5 431.5L208.5 428.5ZM164.9 481.5L165.5 484.5L208.5 484.5L208.5 481.5Z"/><path fill="#dfdfdf" d="M164.9 431.5L164.4 434.8L208.5 434.8L208.5 431.5ZM164.4 478.2L164.9 481.5L208.5 481.5L208.5 478.2Z"/><path fill="#e9e9e9" d="M164.4 434.8L163.9 438.1L208.5 438.1L208.5 434.8ZM163.9 474.9L164.4 478.2L208.5 478.2L208.5 474.9Z"/><path fill="#f4f4f4" d="M163.5 471.4L163.9 474.9L208.5 474.9L208.5 471.4ZM163.9 438.1L163.5 441.6L208.5 441.6L208.5 438.1Z"/><path fill="#fdfdfd" d="M163.2 467.8L163.5 471.4L208.5 471.4L208.5 467.8ZM163.5 441.6L163.2 445.2L208.5 445.2L208.5 441.6Z"/><path fill="#ffffff" d="M163 464.1L163.2 467.8L208.5 467.8L208.5 464.1ZM163.2 445.2L163 448.9L208.5 448.9L208.5 445.2ZM162.8 460.3L163 464.1L208.5 464.1L208.5 460.3ZM163 448.9L162.8 452.7L208.5 452.7L208.5 448.9ZM162.8 456.5L162.8 460.3L208.5 460.3L208.5 456.5ZM162.8 452.7L162.8 456.5L208.5 456.5L208.5 452.7Z"/><path d="M94.9 496.7L96.6 497.4M96.6 415.6L94.9 416.3M94.9 496.7L96.6 497.4M96.6 415.6L94.9 416.3M68 456.5L68 458.4L68.2 460.3L68.4 462.2L68.7 464.1L69 465.9L69.5 467.8L70 469.6L70.6 471.4L71.3 473.1L72.1 474.9L72.9 476.6L73.8 478.2L74.8 479.9L75.9 481.5L77 483L78.2 484.5L79.4 485.9L80.7 487.3L82.1 488.6L83.5 489.8L85 491L86.5 492.1L88.1 493.2L89.8 494.2L91.4 495.1L93.1 495.9L94.9 496.7L96.6 497.4L98.4 498L100.2 498.5L102.1 499L103.9 499.3L105.8 499.6L107.7 499.8M107.7 413.2L105.8 413.4L103.9 413.7L102.1 414L100.2 414.5L98.4 415L96.6 415.6L94.9 416.3L93.1 417.1L91.4 417.9L89.8 418.8L88.1 419.8L86.5 420.9L85 422L83.5 423.2L82.1 424.4L80.7 425.7L79.4 427.1L78.2 428.5L77 430L75.9 431.5L74.8 433.1L73.8 434.8L72.9 436.4L72.1 438.1L71.3 439.9L70.6 441.6L70 443.4L69.5 445.2L69 447.1L68.7 448.9L68.4 450.8L68.2 452.7L68 454.6L68 456.5M102.7 456.5L102.7 458.4L102.8 460.3L103 462.2L103.2 464.1L103.5 465.9L103.8 467.8L104.2 469.6L104.6 471.4L105.1 473.1L105.7 474.9L106.3 476.6L107 478.2L107.7 479.9L108.5 481.5L109.3 483L110.1 484.5L111.1 485.9L112 487.3L113 488.6L114.1 489.8L115.2 491L116.3 492.1L117.4 493.2L118.6 494.2L119.8 495.1L121.1 495.9L122.4 496.7L123.7 497.4L125 498L126.3 498.5L127.7 499L129 499.3L130.4 499.6L131.8 499.8L133.2 500M133.2 413L131.8 413.2L130.4 413.4L129 413.7L127.7 414L126.3 414.5L125 415L123.7 415.6L122.4 416.3L121.1 417.1L119.8 417.9L118.6 418.8L117.4 419.8L116.3 420.9L115.2 422L114.1 423.2L113 424.4L112 425.7L111.1 427.1L110.1 428.5L109.3 430L108.5 431.5L107.7 433.1L107 434.8L106.3 436.4L105.7 438.1L105.1 439.9L104.6 441.6L104.2 443.4L103.8 445.2L103.5 447.1L103.2 448.9L103 450.8L102.8 452.7L102.7 454.6L102.7 456.5M162.8 456.5L162.8 458.4L162.8 460.3L162.9 462.2L163 464.1L163.1 465.9L163.2 467.8L163.3 469.6L163.5 471.4L163.7 473.1L163.9 474.9L164.1 476.6L164.4 478.2L164.6 479.9L164.9 481.5L165.2 483L165.5 484.5L165.9 485.9L166.2 487.3L166.6 488.6L167 489.8L167.4 491L167.8 492.1L168.2 493.2L168.6 494.2L169.1 495.1L169.5 495.9L170 496.7L170.5 497.4L171 498L171.4 498.5L171.9 499L172.4 499.3L172.9 499.6L173.4 499.8L173.9 500M173.9 413L173.4 413.2L172.9 413.4L172.4 413.7L171.9 414L171.4 414.5L171 415L170.5 415.6L170 416.3L169.5 417.1L169.1 417.9L168.6 418.8L168.2 419.8L167.8 420.9L167.4 422L167 423.2L166.6 424.4L166.2 425.7L165.9 427.1L165.5 428.5L165.2 430L164.9 431.5L164.6 433.1L164.4 434.8L164.1 436.4L163.9 438.1L163.7 439.9L163.5 441.6L163.3 443.4L163.2 445.2L163.1 447.1L163 448.9L162.9 450.8L162.8 452.7L162.8 454.6L162.8 456.5M208.5 456.5L208.5 458.4L208.5 460.3L208.5 462.2L208.5 464.1L208.5 465.9L208.5 467.8L208.5 469.6L208.5 471.4L208.5 473.1L208.5 474.9L208.5 476.6L208.5 478.2L208.5 479.9L208.5 481.5L208.5 483L208.5 484.5L208.5 485.9L208.5 487.3L208.5 488.6L208.5 489.8L208.5 491L208.5 492.1L208.5 493.2L208.5 494.2L208.5 495.1L208.5 495.9L208.5 496.7L208.5 497.4L208.5 498L208.5 498.5L208.5 499L208.5 499.3L208.5 499.6L208.5 499.8L208.5 500M208.5 413L208.5 413.2L208.5 413.4L208.5 413.7L208.5 414L208.5 414.5L208.5 415L208.5 415.6L208.5 416.3L208.5 417.1L208.5 417.9L208.5 418.8L208.5 419.8L208.5 420.9L208.5 422L208.5 423.2L208.5 424.4L208.5 425.7L208.5 427.1L208.5 428.5L208.5 430L208.5 431.5L208.5 433.1L208.5 434.8L208.5 436.4L208.5 438.1L208.5 439.9L208.5 441.6L208.5 443.4L208.5 445.2L208.5 447.1L208.5 448.9L208.5 450.8L208.5 452.7L208.5 454.6L208.5 456.5M198.2 456.5L198.2 458.4L198.2 460.3L198.2 462.2L198.2 464.1L198.2 465.9L198.2 467.8L198.2 469.6L198.2 471.4L198.2 473.1L198.2 474.9L198.2 476.6L198.2 478.2L198.2 479.9L198.2 481.5L198.2 483L198.2 484.5L198.2 485.9L198.2 487.3L198.2 488.6L198.2 489.8L198.2 491L198.2 492.1L198.2 493.2L198.2 494.2L198.2 495.1L198.2 495.9L198.2 496.7L198.2 497.4L198.2 498L198.2 498.5L198.2 499L198.2 499.3L198.2 499.6L198.2 499.8L198.2 500M198.2 413L198.2 413.2L198.2 413.4L198.2 413.7L198.2 414L198.2 414.5L198.2 415L198.2 415.6L198.2 416.3L198.2 417.1L198.2 417.9L198.2 418.8L198.2 419.8L198.2 420.9L198.2 422L198.2 423.2L198.2 424.4L198.2 425.7L198.2 427.1L198.2 428.5L198.2 430L198.2 431.5L198.2 433.1L198.2 434.8L198.2 436.4L198.2 438.1L198.2 439.9L198.2 441.6L198.2 443.4L198.2 445.2L198.2 447.1L198.2 448.9L198.2 450.8L198.2 452.7L198.2 454.6L198.2 456.5" stroke="#0000ff" stroke-width="1" fill="none"/></svg>
<div style="left:272px;top:33px;width:268px;height:275px;background:#ece9d8;"></div>
<div style="left:272px;top:33px;width:268px;height:1px;background:#f1efe2;"></div>
<div style="left:272px;top:33px;width:1px;height:275px;background:#f1efe2;"></div>
<div style="left:273px;top:34px;width:266px;height:1px;background:#fff;"></div>
<div style="left:273px;top:34px;width:1px;height:273px;background:#fff;"></div>
<div style="left:538px;top:34px;width:1px;height:273px;background:#aca899;"></div>
<div style="left:273px;top:306px;width:266px;height:1px;background:#aca899;"></div>
<div style="left:539px;top:33px;width:1px;height:275px;background:#716f64;"></div>
<div style="left:272px;top:307px;width:268px;height:1px;background:#716f64;"></div>
<div style="left:275px;top:36px;width:262px;height:25px;background:linear-gradient(to right,#84848c 0%,#c0c0c0 100%);"></div>
<svg style="left:280px;top:41px" width="16" height="13" viewBox="0 0 16 13" shape-rendering="crispEdges"><rect x="0" y="0" width="16" height="13" fill="#fffffb"/><rect x="0" y="0" width="16" height="2" fill="#0a6cdc"/><rect x="0" y="2" width="16" height="1" fill="#c8dcf4"/><rect x="13" y="1" width="1" height="1" fill="#f06c28"/><rect x="13" y="0" width="2" height="1" fill="#4890e0"/><rect x="15" y="2" width="1" height="10" fill="#3c7cd8"/><rect x="0" y="12" width="16" height="1" fill="#1444a4"/></svg>
<span class="t" style="left:302px;top:43px;letter-spacing:-0.4px;">View 2</span>
<div class="cb" style="left:485px;top:38px;width:16px;height:21px"></div>
<div style="left:490px;top:51px;width:6px;height:2px;background:#fff;"></div>
<div style="left:489px;top:50px;width:6px;height:2px;background:#aca899;"></div>
<div class="cb" style="left:501px;top:38px;width:16px;height:21px"></div>
<div style="left:503px;top:43px;width:10px;height:9px;box-sizing:border-box;border:1px solid #000;border-top-width:2px"></div>
<div class="cb" style="left:519px;top:38px;width:16px;height:21px"></div>
<svg style="left:523px;top:44px" width="10" height="10" viewBox="0 0 10 10"><path d="M1.5 1.5 L8.5 8.5 M8.5 1.5 L1.5 8.5" stroke="#fff" stroke-width="1.8"/><path d="M0.5 0.5 L7.5 7.5 M7.5 0.5 L0.5 7.5" stroke="#aca899" stroke-width="1.9"/></svg>
<div style="left:275px;top:62px;width:262px;height:243px;background:#ffffe1;"></div>
<div style="left:275px;top:62px;width:262px;height:1px;background:#aca899;"></div>
<div style="left:275px;top:62px;width:1px;height:243px;background:#aca899;"></div>
<div style="left:276px;top:63px;width:260px;height:1px;background:#716f64;"></div>
<div style="left:276px;top:63px;width:1px;height:241px;background:#716f64;"></div>
<div style="left:535px;top:63px;width:1px;height:241px;background:#f1efe2;"></div>
<div style="left:276px;top:303px;width:260px;height:1px;background:#f1efe2;"></div>
<div style="left:536px;top:62px;width:1px;height:243px;background:#fff;"></div>
<div style="left:275px;top:304px;width:262px;height:1px;background:#fff;"></div>
<svg style="left:277px;top:64px;will-change:transform" width="258" height="239" viewBox="277 64 258 239" shape-rendering="crispEdges" text-rendering="optimizeSpeed" font-family="Liberation Sans, sans-serif" font-weight="bold" font-size="12"><path fill="#848484" d="M362.5 156.2L362.7 152.4L362.7 152.4L362.5 156.2Z"/><path fill="#808080" d="M449.3 152.4L449.5 156.2L449.5 156.2L449.3 152.4Z"/><path fill="#848484" d="M362.7 152.4L363.2 148.6L363.2 148.6L362.7 152.4Z"/><path fill="#808080" d="M448.8 148.6L449.3 152.4L449.3 152.4L448.8 148.6Z"/><path fill="#858585" d="M363.2 148.6L364 144.9L364 144.9L363.2 148.6Z"/><path fill="#808080" d="M448 144.9L448.8 148.6L448.8 148.6L448 144.9Z"/><path fill="#868686" d="M364 144.9L365.1 141.3L365.1 141.3L364 144.9Z"/><path fill="#808080" d="M446.9 141.3L448 144.9L448 144.9L446.9 141.3Z"/><path fill="#868686" d="M365.1 141.3L366.6 137.8L366.6 137.8L365.1 141.3Z"/><path fill="#808080" d="M445.4 137.8L446.9 141.3L446.9 141.3L445.4 137.8Z"/><path fill="#878787" d="M366.6 137.8L368.3 134.4L368.3 134.4L366.6 137.8Z"/><path fill="#808080" d="M443.7 134.4L445.4 137.8L445.4 137.8L443.7 134.4Z"/><path fill="#818181" d="M441.6 131.2L443.7 134.4L443.7 134.4L441.6 131.2Z"/><path fill="#888888" d="M368.3 134.4L370.4 131.2L370.4 131.2L368.3 134.4Z"/><path fill="#828282" d="M439.3 128.2L441.6 131.2L441.6 131.2L439.3 128.2Z"/><path fill="#888888" d="M370.4 131.2L372.7 128.2L372.7 128.2L370.4 131.2Z"/><path fill="#838383" d="M436.8 125.4L439.3 128.2L439.3 128.2L436.8 125.4Z"/><path fill="#888888" d="M372.7 128.2L375.2 125.4L375.2 125.4L372.7 128.2Z"/><path fill="#898989" d="M375.2 125.4L378 122.9L378 122.9L375.2 125.4Z"/><path fill="#848484" d="M434 122.9L436.8 125.4L436.8 125.4L434 122.9Z"/><path fill="#858585" d="M431 120.6L434 122.9L434 122.9L431 120.6Z"/><path fill="#898989" d="M378 122.9L381 120.6L381 120.6L378 122.9ZM381 120.6L384.2 118.5L384.2 118.5L381 120.6Z"/><path fill="#858585" d="M427.8 118.5L431 120.6L431 120.6L427.8 118.5Z"/><path fill="#898989" d="M384.2 118.5L387.6 116.8L387.6 116.8L384.2 118.5Z"/><path fill="#868686" d="M424.4 116.8L427.8 118.5L427.8 118.5L424.4 116.8Z"/><path fill="#878787" d="M420.9 115.3L424.4 116.8L424.4 116.8L420.9 115.3Z"/><path fill="#898989" d="M387.6 116.8L391.1 115.3L391.1 115.3L387.6 116.8Z"/><path fill="#878787" d="M417.3 114.2L420.9 115.3L420.9 115.3L417.3 114.2Z"/><path fill="#898989" d="M391.1 115.3L394.7 114.2L394.7 114.2L391.1 115.3Z"/><path fill="#888888" d="M413.6 113.4L417.3 114.2L417.3 114.2L413.6 113.4Z"/><path fill="#898989" d="M394.7 114.2L398.4 113.4L398.4 113.4L394.7 114.2Z"/><path fill="#888888" d="M409.8 112.9L413.6 113.4L413.6 113.4L409.8 112.9Z"/><path fill="#898989" d="M398.4 113.4L402.2 112.9L402.2 112.9L398.4 113.4ZM406 112.7L409.8 112.9L409.8 112.9L406 112.7ZM402.2 112.9L406 112.7L406 112.7L402.2 112.9Z"/><path fill="#868686" d="M362.5 179.2L362.7 176.5L362.7 152.4L362.5 156.2Z"/><path fill="#808080" d="M449.3 176.5L449.5 179.2L449.5 156.2L449.3 152.4Z"/><path fill="#8a8a8a" d="M362.7 176.5L363.2 173.7L363.2 148.6L362.7 152.4Z"/><path fill="#838383" d="M448.8 173.7L449.3 176.5L449.3 152.4L448.8 148.6Z"/><path fill="#8f8f8f" d="M363.2 173.7L364 171L364 144.9L363.2 148.6Z"/><path fill="#888888" d="M448 171L448.8 173.7L448.8 148.6L448 144.9Z"/><path fill="#939393" d="M364 171L365.1 168.4L365.1 141.3L364 144.9Z"/><path fill="#8c8c8c" d="M446.9 168.4L448 171L448 144.9L446.9 141.3Z"/><path fill="#979797" d="M365.1 168.4L366.6 165.8L366.6 137.8L365.1 141.3Z"/><path fill="#919191" d="M445.4 165.8L446.9 168.4L446.9 141.3L445.4 137.8Z"/><path fill="#9c9c9c" d="M366.6 165.8L368.3 163.3L368.3 134.4L366.6 137.8Z"/><path fill="#959595" d="M443.7 163.3L445.4 165.8L445.4 137.8L443.7 134.4Z"/><path fill="#999999" d="M441.6 161L443.7 163.3L443.7 134.4L441.6 131.2Z"/><path fill="#a0a0a0" d="M368.3 163.3L370.4 161L370.4 131.2L368.3 134.4Z"/><path fill="#9d9d9d" d="M439.3 158.8L441.6 161L441.6 131.2L439.3 128.2Z"/><path fill="#a3a3a3" d="M370.4 161L372.7 158.8L372.7 128.2L370.4 131.2Z"/><path fill="#a1a1a1" d="M436.8 156.7L439.3 158.8L439.3 128.2L436.8 125.4Z"/><path fill="#a7a7a7" d="M372.7 158.8L375.2 156.7L375.2 125.4L372.7 128.2Z"/><path fill="#aaaaaa" d="M375.2 156.7L378 154.8L378 122.9L375.2 125.4Z"/><path fill="#a5a5a5" d="M434 154.8L436.8 156.7L436.8 125.4L434 122.9Z"/><path fill="#adadad" d="M378 154.8L381 153.2L381 120.6L378 122.9Z"/><path fill="#a8a8a8" d="M431 153.2L434 154.8L434 122.9L431 120.6Z"/><path fill="#ababab" d="M427.8 151.7L431 153.2L431 120.6L427.8 118.5Z"/><path fill="#b0b0b0" d="M381 153.2L384.2 151.7L384.2 118.5L381 120.6Z"/><path fill="#b2b2b2" d="M384.2 151.7L387.6 150.4L387.6 116.8L384.2 118.5Z"/><path fill="#aeaeae" d="M424.4 150.4L427.8 151.7L427.8 118.5L424.4 116.8Z"/><path fill="#b1b1b1" d="M420.9 149.3L424.4 150.4L424.4 116.8L420.9 115.3Z"/><path fill="#b4b4b4" d="M387.6 150.4L391.1 149.3L391.1 115.3L387.6 116.8Z"/><path fill="#b3b3b3" d="M417.3 148.5L420.9 149.3L420.9 115.3L417.3 114.2Z"/><path fill="#b5b5b5" d="M391.1 149.3L394.7 148.5L394.7 114.2L391.1 115.3ZM413.6 147.9L417.3 148.5L417.3 114.2L413.6 113.4Z"/><path fill="#b7b7b7" d="M394.7 148.5L398.4 147.9L398.4 113.4L394.7 114.2Z"/><path fill="#b6b6b6" d="M409.8 147.5L413.6 147.9L413.6 113.4L409.8 112.9Z"/><path fill="#b7b7b7" d="M398.4 147.9L402.2 147.5L402.2 112.9L398.4 113.4ZM406 147.4L409.8 147.5L409.8 112.9L406 112.7ZM402.2 147.5L406 147.4L406 112.7L402.2 112.9Z"/><path fill="#878787" d="M362.5 219.2L362.7 218.1L362.7 176.5L362.5 179.2Z"/><path fill="#808080" d="M449.3 218.1L449.5 219.2L449.5 179.2L449.3 176.5Z"/><path fill="#8e8e8e" d="M362.7 218.1L363.2 217.1L363.2 173.7L362.7 176.5Z"/><path fill="#878787" d="M448.8 217.1L449.3 218.1L449.3 176.5L448.8 173.7Z"/><path fill="#959595" d="M363.2 217.1L364 216.1L364 171L363.2 173.7Z"/><path fill="#8e8e8e" d="M448 216.1L448.8 217.1L448.8 173.7L448 171Z"/><path fill="#9c9c9c" d="M364 216.1L365.1 215.2L365.1 168.4L364 171Z"/><path fill="#959595" d="M446.9 215.2L448 216.1L448 171L446.9 168.4Z"/><path fill="#878787" d="M362.5 253.2L362.7 253.2L362.7 218.1L362.5 219.2Z"/><path fill="#808080" d="M449.3 253.2L449.5 253.2L449.5 219.2L449.3 218.1Z"/><path fill="#9c9c9c" d="M445.4 214.2L446.9 215.2L446.9 168.4L445.4 165.8Z"/><path fill="#a3a3a3" d="M365.1 215.2L366.6 214.2L366.6 165.8L365.1 168.4Z"/><path fill="#8f8f8f" d="M362.7 253.2L363.2 253.2L363.2 217.1L362.7 218.1Z"/><path fill="#888888" d="M448.8 253.2L449.3 253.2L449.3 218.1L448.8 217.1Z"/><path fill="#aaaaaa" d="M366.6 214.2L368.3 213.3L368.3 163.3L366.6 165.8Z"/><path fill="#a3a3a3" d="M443.7 213.3L445.4 214.2L445.4 165.8L443.7 163.3Z"/><path fill="#aaaaaa" d="M441.6 212.5L443.7 213.3L443.7 163.3L441.6 161Z"/><path fill="#b1b1b1" d="M368.3 213.3L370.4 212.5L370.4 161L368.3 163.3Z"/><path fill="#979797" d="M363.2 253.2L364 253.2L364 216.1L363.2 217.1Z"/><path fill="#909090" d="M448 253.2L448.8 253.2L448.8 217.1L448 216.1Z"/><path fill="#b1b1b1" d="M439.3 211.7L441.6 212.5L441.6 161L439.3 158.8Z"/><path fill="#b7b7b7" d="M370.4 212.5L372.7 211.7L372.7 158.8L370.4 161Z"/><path fill="#9f9f9f" d="M364 253.2L365.1 253.2L365.1 215.2L364 216.1Z"/><path fill="#979797" d="M446.9 253.2L448 253.2L448 216.1L446.9 215.2Z"/><path fill="#b7b7b7" d="M436.8 210.9L439.3 211.7L439.3 158.8L436.8 156.7Z"/><path fill="#bebebe" d="M372.7 211.7L375.2 210.9L375.2 156.7L372.7 158.8Z"/><path fill="#c6c6c6" d="M375.2 210.9L378 210.2L378 154.8L375.2 156.7Z"/><path fill="#bebebe" d="M434 210.2L436.8 210.9L436.8 156.7L434 154.8Z"/><path fill="#9f9f9f" d="M445.4 253.2L446.9 253.2L446.9 215.2L445.4 214.2Z"/><path fill="#a6a6a6" d="M365.1 253.2L366.6 253.2L366.6 214.2L365.1 215.2Z"/><path fill="#cdcdcd" d="M378 210.2L381 209.6L381 153.2L378 154.8Z"/><path fill="#c6c6c6" d="M431 209.6L434 210.2L434 154.8L431 153.2Z"/><path fill="#aeaeae" d="M366.6 253.2L368.3 253.2L368.3 213.3L366.6 214.2Z"/><path fill="#a7a7a7" d="M443.7 253.2L445.4 253.2L445.4 214.2L443.7 213.3Z"/><path fill="#d4d4d4" d="M381 209.6L384.2 209.1L384.2 151.7L381 153.2Z"/><path fill="#cdcdcd" d="M427.8 209.1L431 209.6L431 153.2L427.8 151.7Z"/><path fill="#d4d4d4" d="M424.4 208.6L427.8 209.1L427.8 151.7L424.4 150.4Z"/><path fill="#dcdcdc" d="M384.2 209.1L387.6 208.6L387.6 150.4L384.2 151.7Z"/><path fill="#e2e2e2" d="M387.6 208.6L391.1 208.2L391.1 149.3L387.6 150.4Z"/><path fill="#dcdcdc" d="M420.9 208.2L424.4 208.6L424.4 150.4L420.9 149.3Z"/><path fill="#aeaeae" d="M441.6 253.2L443.7 253.2L443.7 213.3L441.6 212.5Z"/><path fill="#b5b5b5" d="M368.3 253.2L370.4 253.2L370.4 212.5L368.3 213.3Z"/><path fill="#e2e2e2" d="M417.3 207.9L420.9 208.2L420.9 149.3L417.3 148.5Z"/><path fill="#e8e8e8" d="M391.1 208.2L394.7 207.9L394.7 148.5L391.1 149.3ZM413.6 207.7L417.3 207.9L417.3 148.5L413.6 147.9Z"/><path fill="#ededed" d="M394.7 207.9L398.4 207.7L398.4 147.9L394.7 148.5ZM409.8 207.5L413.6 207.7L413.6 147.9L409.8 147.5Z"/><path fill="#f0f0f0" d="M398.4 207.7L402.2 207.5L402.2 147.5L398.4 147.9ZM406 207.5L409.8 207.5L409.8 147.5L406 147.4Z"/><path fill="#f1f1f1" d="M402.2 207.5L406 207.5L406 147.4L402.2 147.5Z"/><path fill="#b6b6b6" d="M439.3 253.2L441.6 253.2L441.6 212.5L439.3 211.7Z"/><path fill="#bdbdbd" d="M370.4 253.2L372.7 253.2L372.7 211.7L370.4 212.5Z"/><path fill="#c6c6c6" d="M372.7 253.2L375.2 253.2L375.2 210.9L372.7 211.7Z"/><path fill="#bebebe" d="M436.8 253.2L439.3 253.2L439.3 211.7L436.8 210.9Z"/><path fill="#cfcfcf" d="M375.2 253.2L378 253.2L378 210.2L375.2 210.9Z"/><path fill="#c7c7c7" d="M434 253.2L436.8 253.2L436.8 210.9L434 210.2Z"/><path fill="#d9d9d9" d="M378 253.2L381 253.2L381 209.6L378 210.2Z"/><path fill="#d0d0d0" d="M431 253.2L434 253.2L434 210.2L431 209.6Z"/><path fill="#e3e3e3" d="M381 253.2L384.2 253.2L384.2 209.1L381 209.6Z"/><path fill="#dadada" d="M427.8 253.2L431 253.2L431 209.6L427.8 209.1Z"/><path fill="#ededed" d="M384.2 253.2L387.6 253.2L387.6 208.6L384.2 209.1Z"/><path fill="#e4e4e4" d="M424.4 253.2L427.8 253.2L427.8 209.1L424.4 208.6Z"/><path fill="#eeeeee" d="M420.9 253.2L424.4 253.2L424.4 208.6L420.9 208.2Z"/><path fill="#f7f7f7" d="M387.6 253.2L391.1 253.2L391.1 208.2L387.6 208.6Z"/><path fill="#f8f8f8" d="M417.3 253.2L420.9 253.2L420.9 208.2L417.3 207.9Z"/><path fill="#ffffff" d="M391.1 253.2L394.7 253.2L394.7 207.9L391.1 208.2ZM413.6 253.2L417.3 253.2L417.3 207.9L413.6 207.7ZM394.7 253.2L398.4 253.2L398.4 207.7L394.7 207.9ZM409.8 253.2L413.6 253.2L413.6 207.7L409.8 207.5ZM398.4 253.2L402.2 253.2L402.2 207.5L398.4 207.7ZM406 253.2L409.8 253.2L409.8 207.5L406 207.5ZM402.2 253.2L406 253.2L406 207.5L402.2 207.5Z"/><path d="M406 253.2L407.9 253.2L409.8 253.2L411.7 253.2L413.6 253.2L415.4 253.2L417.3 253.2L419.1 253.2L420.9 253.2L422.6 253.2L424.4 253.2L426.1 253.2L427.8 253.2L429.4 253.2L431 253.2L432.5 253.2L434 253.2L435.4 253.2L436.8 253.2L438.1 253.2L439.3 253.2L440.5 253.2L441.6 253.2L442.7 253.2L443.7 253.2L444.6 253.2L445.4 253.2L446.2 253.2L446.9 253.2L447.5 253.2L448 253.2L448.5 253.2L448.8 253.2L449.1 253.2L449.3 253.2L449.5 253.2M362.5 253.2L362.7 253.2L362.9 253.2L363.2 253.2L363.5 253.2L364 253.2L364.5 253.2L365.1 253.2L365.8 253.2L366.6 253.2L367.4 253.2L368.3 253.2L369.3 253.2L370.4 253.2L371.5 253.2L372.7 253.2L373.9 253.2L375.2 253.2L376.6 253.2L378 253.2L379.5 253.2L381 253.2L382.6 253.2L384.2 253.2L385.9 253.2L387.6 253.2L389.4 253.2L391.1 253.2L392.9 253.2L394.7 253.2L396.6 253.2L398.4 253.2L400.3 253.2L402.2 253.2L404.1 253.2L406 253.2M406 242.9L407.9 242.9L409.8 242.9L411.7 242.9L413.6 242.9L415.4 242.9L417.3 242.9L419.1 242.9L420.9 242.9L422.6 242.9L424.4 242.9L426.1 242.9L427.8 242.9L429.4 242.9L431 242.9L432.5 242.9L434 242.9L435.4 242.9L436.8 242.9L438.1 242.9L439.3 242.9L440.5 242.9L441.6 242.9L442.7 242.9L443.7 242.9L444.6 242.9L445.4 242.9L446.2 242.9L446.9 242.9L447.5 242.9L448 242.9L448.5 242.9L448.8 242.9L449.1 242.9L449.3 242.9L449.5 242.9M362.5 242.9L362.7 242.9L362.9 242.9L363.2 242.9L363.5 242.9L364 242.9L364.5 242.9L365.1 242.9L365.8 242.9L366.6 242.9L367.4 242.9L368.3 242.9L369.3 242.9L370.4 242.9L371.5 242.9L372.7 242.9L373.9 242.9L375.2 242.9L376.6 242.9L378 242.9L379.5 242.9L381 242.9L382.6 242.9L384.2 242.9L385.9 242.9L387.6 242.9L389.4 242.9L391.1 242.9L392.9 242.9L394.7 242.9L396.6 242.9L398.4 242.9L400.3 242.9L402.2 242.9L404.1 242.9L406 242.9M406 207.5L407.9 207.5L409.8 207.5L411.7 207.6L413.6 207.7L415.4 207.8L417.3 207.9L419.1 208L420.9 208.2L422.6 208.4L424.4 208.6L426.1 208.8L427.8 209.1L429.4 209.3L431 209.6L432.5 209.9L434 210.2L435.4 210.6L436.8 210.9L438.1 211.3L439.3 211.7L440.5 212.1L441.6 212.5L442.7 212.9L443.7 213.3L444.6 213.8L445.4 214.2L446.2 214.7L446.9 215.2L447.5 215.7L448 216.1L448.5 216.6L448.8 217.1L449.1 217.6L449.3 218.1L449.5 218.6M362.5 218.6L362.7 218.1L362.9 217.6L363.2 217.1L363.5 216.6L364 216.1L364.5 215.7L365.1 215.2L365.8 214.7L366.6 214.2L367.4 213.8L368.3 213.3L369.3 212.9L370.4 212.5L371.5 212.1L372.7 211.7L373.9 211.3L375.2 210.9L376.6 210.6L378 210.2L379.5 209.9L381 209.6L382.6 209.3L384.2 209.1L385.9 208.8L387.6 208.6L389.4 208.4L391.1 208.2L392.9 208L394.7 207.9L396.6 207.8L398.4 207.7L400.3 207.6L402.2 207.5L404.1 207.5L406 207.5M406 147.4L407.9 147.4L409.8 147.5L411.7 147.7L413.6 147.9L415.4 148.2L417.3 148.5L419.1 148.9L420.9 149.3L422.6 149.8L424.4 150.4L426.1 151L427.8 151.7L429.4 152.4L431 153.2L432.5 154L434 154.8L435.4 155.8L436.8 156.7L438.1 157.7L439.3 158.8L440.5 159.9L441.6 161L442.7 162.1L443.7 163.3L444.6 164.5L445.4 165.8L446.2 167.1L446.9 168.4L447.5 169.7L448 171L448.5 172.4L448.8 173.7L449.1 175.1L449.3 176.5L449.5 177.9M362.5 177.9L362.7 176.5L362.9 175.1L363.2 173.7L363.5 172.4L364 171L364.5 169.7L365.1 168.4L365.8 167.1L366.6 165.8L367.4 164.5L368.3 163.3L369.3 162.1L370.4 161L371.5 159.9L372.7 158.8L373.9 157.7L375.2 156.7L376.6 155.8L378 154.8L379.5 154L381 153.2L382.6 152.4L384.2 151.7L385.9 151L387.6 150.4L389.4 149.8L391.1 149.3L392.9 148.9L394.7 148.5L396.6 148.2L398.4 147.9L400.3 147.7L402.2 147.5L404.1 147.4L406 147.4M406 112.7L407.9 112.7L409.8 112.9L411.7 113.1L413.6 113.4L415.4 113.7L417.3 114.2L419.1 114.7L420.9 115.3L422.6 116L424.4 116.8L426.1 117.6L427.8 118.5L429.4 119.5L431 120.6L432.5 121.7L434 122.9L435.4 124.1L436.8 125.4L438.1 126.8L439.3 128.2L440.5 129.7L441.6 131.2L442.7 132.8L443.7 134.4L444.6 136.1L445.4 137.8L446.2 139.6L446.9 141.3L447.5 143.1L448 144.9L448.5 146.8L448.8 148.6M449.1 150.5L449.3 152.4M362.7 152.4L362.9 150.5M363.2 148.6L363.5 146.8L364 144.9L364.5 143.1L365.1 141.3L365.8 139.6L366.6 137.8L367.4 136.1L368.3 134.4L369.3 132.8L370.4 131.2L371.5 129.7L372.7 128.2L373.9 126.8L375.2 125.4L376.6 124.1L378 122.9L379.5 121.7L381 120.6L382.6 119.5L384.2 118.5L385.9 117.6L387.6 116.8L389.4 116L391.1 115.3L392.9 114.7L394.7 114.2L396.6 113.7L398.4 113.4L400.3 113.1L402.2 112.9L404.1 112.7L406 112.7M444.6 136.1L445.4 137.8M446.2 139.6L446.9 141.3M449.1 150.5L449.3 152.4M362.7 152.4L362.9 150.5M365.1 141.3L365.8 139.6M366.6 137.8L367.4 136.1M444.6 136.1L445.4 137.8M446.2 139.6L446.9 141.3M449.1 150.5L449.3 152.4M362.7 152.4L362.9 150.5M365.1 141.3L365.8 139.6M366.6 137.8L367.4 136.1" stroke="#0000ff" stroke-width="1" fill="none"/></svg>
<div style="left:4px;top:33px;width:269px;height:275px;background:#ece9d8;"></div>
<div style="left:4px;top:33px;width:269px;height:1px;background:#f1efe2;"></div>
<div style="left:4px;top:33px;width:1px;height:275px;background:#f1efe2;"></div>
<div style="left:5px;top:34px;width:267px;height:1px;background:#fff;"></div>
<div style="left:5px;top:34px;width:1px;height:273px;background:#fff;"></div>
<div style="left:271px;top:34px;width:1px;height:273px;background:#aca899;"></div>
<div style="left:5px;top:306px;width:267px;height:1px;background:#aca899;"></div>
<div style="left:272px;top:33px;width:1px;height:275px;background:#716f64;"></div>
<div style="left:4px;top:307px;width:269px;height:1px;background:#716f64;"></div>
<div style="left:7px;top:36px;width:263px;height:25px;background:linear-gradient(to right,#84848c 0%,#c0c0c0 100%);"></div>
<svg style="left:12px;top:41px" width="16" height="13" viewBox="0 0 16 13" shape-rendering="crispEdges"><rect x="0" y="0" width="16" height="13" fill="#fffffb"/><rect x="0" y="0" width="16" height="2" fill="#0a6cdc"/><rect x="0" y="2" width="16" height="1" fill="#c8dcf4"/><rect x="13" y="1" width="1" height="1" fill="#f06c28"/><rect x="13" y="0" width="2" height="1" fill="#4890e0"/><rect x="15" y="2" width="1" height="10" fill="#3c7cd8"/><rect x="0" y="12" width="16" height="1" fill="#1444a4"/></svg>
<span class="t" style="left:34px;top:43px;letter-spacing:-0.4px;">View 1</span>
<div class="cb" style="left:218px;top:38px;width:16px;height:21px"></div>
<div style="left:223px;top:51px;width:6px;height:2px;background:#fff;"></div>
<div style="left:222px;top:50px;width:6px;height:2px;background:#aca899;"></div>
<div class="cb" style="left:234px;top:38px;width:16px;height:21px"></div>
<div style="left:236px;top:43px;width:10px;height:9px;box-sizing:border-box;border:1px solid #000;border-top-width:2px"></div>
<div class="cb" style="left:252px;top:38px;width:16px;height:21px"></div>
<svg style="left:256px;top:44px" width="10" height="10" viewBox="0 0 10 10"><path d="M1.5 1.5 L8.5 8.5 M8.5 1.5 L1.5 8.5" stroke="#fff" stroke-width="1.8"/><path d="M0.5 0.5 L7.5 7.5 M7.5 0.5 L0.5 7.5" stroke="#aca899" stroke-width="1.9"/></svg>
<div style="left:7px;top:62px;width:263px;height:243px;background:#ffffe1;"></div>
<div style="left:7px;top:62px;width:263px;height:1px;background:#aca899;"></div>
<div style="left:7px;top:62px;width:1px;height:243px;background:#aca899;"></div>
<div style="left:8px;top:63px;width:261px;height:1px;background:#716f64;"></div>
<div style="left:8px;top:63px;width:1px;height:241px;background:#716f64;"></div>
<div style="left:268px;top:63px;width:1px;height:241px;background:#f1efe2;"></div>
<div style="left:8px;top:303px;width:261px;height:1px;background:#f1efe2;"></div>
<div style="left:269px;top:62px;width:1px;height:243px;background:#fff;"></div>
<div style="left:7px;top:304px;width:263px;height:1px;background:#fff;"></div>
<svg style="left:9px;top:64px;will-change:transform" width="259" height="239" viewBox="9 64 259 239" shape-rendering="crispEdges" text-rendering="optimizeSpeed" font-family="Liberation Sans, sans-serif" font-weight="bold" font-size="12"><path fill="#808080" d="M68 253.5L68.2 253.5L68.2 207.8L68 207.8ZM68 207.8L68.2 207.8L102.8 147.8L102.7 147.7Z"/><path fill="#828282" d="M102.7 147.7L102.8 147.8L162.8 113.2L162.8 113Z"/><path fill="#8d8d8d" d="M162.8 113L162.8 113.2L208.5 113.2L208.5 113Z"/><path fill="#969696" d="M154.8 253.5L155 253.5L155 231.1L154.8 231.1Z"/><path fill="#8f8f8f" d="M154.8 231.1L155 231.1L166.4 211.4L166.3 211.3Z"/><path fill="#858585" d="M166.3 211.3L166.4 211.4L186.1 200L186.1 199.8Z"/><path fill="#808080" d="M186.1 199.8L186.1 200L208.5 200L208.5 199.8ZM68.2 253.5L68.7 253.5L68.7 208L68.2 207.8ZM68.2 207.8L68.7 208L103.2 148.2L102.8 147.8Z"/><path fill="#8a8a8a" d="M102.8 147.8L103.2 148.2L163 113.7L162.8 113.2Z"/><path fill="#949494" d="M162.8 113.2L163 113.7L208.5 113.7L208.5 113.2Z"/><path fill="#9e9e9e" d="M154.3 253.5L154.8 253.5L154.8 231.1L154.3 230.9Z"/><path fill="#969696" d="M154.3 230.9L154.8 231.1L166.3 211.3L165.9 210.9Z"/><path fill="#8c8c8c" d="M165.9 210.9L166.3 211.3L186.1 199.8L185.9 199.3Z"/><path fill="#828282" d="M185.9 199.3L186.1 199.8L208.5 199.8L208.5 199.3Z"/><path fill="#818181" d="M68.7 253.5L69.5 253.5L69.5 208.2L68.7 208Z"/><path fill="#888888" d="M68.7 208L69.5 208.2L103.8 148.8L103.2 148.2Z"/><path fill="#929292" d="M103.2 148.2L103.8 148.8L163.2 114.5L163 113.7Z"/><path fill="#9c9c9c" d="M163 113.7L163.2 114.5L208.5 114.5L208.5 113.7Z"/><path fill="#a5a5a5" d="M153.5 253.5L154.3 253.5L154.3 230.9L153.5 230.7Z"/><path fill="#9e9e9e" d="M153.5 230.7L154.3 230.9L165.9 210.9L165.3 210.3Z"/><path fill="#949494" d="M165.3 210.3L165.9 210.9L185.9 199.3L185.7 198.5Z"/><path fill="#8a8a8a" d="M185.7 198.5L185.9 199.3L208.5 199.3L208.5 198.5Z"/><path fill="#898989" d="M69.5 253.5L70.6 253.5L70.6 208.5L69.5 208.2Z"/><path fill="#909090" d="M69.5 208.2L70.6 208.5L104.6 149.6L103.8 148.8Z"/><path fill="#999999" d="M103.8 148.8L104.6 149.6L163.5 115.6L163.2 114.5Z"/><path fill="#a3a3a3" d="M163.2 114.5L163.5 115.6L208.5 115.6L208.5 114.5Z"/><path fill="#adadad" d="M152.4 253.5L153.5 253.5L153.5 230.7L152.4 230.4Z"/><path fill="#a5a5a5" d="M152.4 230.4L153.5 230.7L165.3 210.3L164.5 209.5Z"/><path fill="#9c9c9c" d="M164.5 209.5L165.3 210.3L185.7 198.5L185.4 197.4Z"/><path fill="#929292" d="M185.4 197.4L185.7 198.5L208.5 198.5L208.5 197.4Z"/><path fill="#919191" d="M70.6 253.5L72.1 253.5L72.1 208.9L70.6 208.5Z"/><path fill="#979797" d="M70.6 208.5L72.1 208.9L105.7 150.7L104.6 149.6Z"/><path fill="#a1a1a1" d="M104.6 149.6L105.7 150.7L163.9 117.1L163.5 115.6Z"/><path fill="#ababab" d="M163.5 115.6L163.9 117.1L208.5 117.1L208.5 115.6Z"/><path fill="#b4b4b4" d="M150.9 253.5L152.4 253.5L152.4 230.4L150.9 230Z"/><path fill="#adadad" d="M150.9 230L152.4 230.4L164.5 209.5L163.4 208.4Z"/><path fill="#a3a3a3" d="M163.4 208.4L164.5 209.5L185.4 197.4L185 195.9Z"/><path fill="#999999" d="M185 195.9L185.4 197.4L208.5 197.4L208.5 195.9Z"/><path fill="#989898" d="M72.1 253.5L73.8 253.5L73.8 209.4L72.1 208.9Z"/><path fill="#bcbcbc" d="M149.2 253.5L150.9 253.5L150.9 230L149.2 229.6Z"/><path fill="#9f9f9f" d="M72.1 208.9L73.8 209.4L107 152L105.7 150.7Z"/><path fill="#b4b4b4" d="M149.2 229.6L150.9 230L163.4 208.4L162.1 207.1Z"/><path fill="#a8a8a8" d="M105.7 150.7L107 152L164.4 118.8L163.9 117.1Z"/><path fill="#aaaaaa" d="M162.1 207.1L163.4 208.4L185 195.9L184.6 194.2Z"/><path fill="#b2b2b2" d="M163.9 117.1L164.4 118.8L208.5 118.8L208.5 117.1Z"/><path fill="#a1a1a1" d="M184.6 194.2L185 195.9L208.5 195.9L208.5 194.2Z"/><path fill="#a0a0a0" d="M73.8 253.5L75.9 253.5L75.9 209.9L73.8 209.4Z"/><path fill="#a6a6a6" d="M73.8 209.4L75.9 209.9L108.5 153.5L107 152Z"/><path fill="#afafaf" d="M107 152L108.5 153.5L164.9 120.9L164.4 118.8Z"/><path fill="#bababa" d="M164.4 118.8L164.9 120.9L208.5 120.9L208.5 118.8Z"/><path fill="#c5c5c5" d="M147.1 253.5L149.2 253.5L149.2 229.6L147.1 229Z"/><path fill="#bcbcbc" d="M147.1 229L149.2 229.6L162.1 207.1L160.6 205.6Z"/><path fill="#b2b2b2" d="M160.6 205.6L162.1 207.1L184.6 194.2L184 192.1Z"/><path fill="#a8a8a8" d="M184 192.1L184.6 194.2L208.5 194.2L208.5 192.1ZM75.9 253.5L78.2 253.5L78.2 210.5L75.9 209.9Z"/><path fill="#aeaeae" d="M75.9 209.9L78.2 210.5L110.1 155.1L108.5 153.5Z"/><path fill="#b7b7b7" d="M108.5 153.5L110.1 155.1L165.5 123.2L164.9 120.9Z"/><path fill="#c2c2c2" d="M164.9 120.9L165.5 123.2L208.5 123.2L208.5 120.9Z"/><path fill="#cecece" d="M144.8 253.5L147.1 253.5L147.1 229L144.8 228.4Z"/><path fill="#c5c5c5" d="M144.8 228.4L147.1 229L160.6 205.6L158.9 203.9Z"/><path fill="#b9b9b9" d="M158.9 203.9L160.6 205.6L184 192.1L183.4 189.8Z"/><path fill="#b0b0b0" d="M183.4 189.8L184 192.1L208.5 192.1L208.5 189.8Z"/><path fill="#afafaf" d="M78.2 253.5L80.7 253.5L80.7 211.2L78.2 210.5Z"/><path fill="#b5b5b5" d="M78.2 210.5L80.7 211.2L112 157L110.1 155.1Z"/><path fill="#bfbfbf" d="M110.1 155.1L112 157L166.2 125.7L165.5 123.2Z"/><path fill="#cbcbcb" d="M165.5 123.2L166.2 125.7L208.5 125.7L208.5 123.2Z"/><path fill="#d8d8d8" d="M142.3 253.5L144.8 253.5L144.8 228.4L142.3 227.7Z"/><path fill="#cdcdcd" d="M142.3 227.7L144.8 228.4L158.9 203.9L157.1 202.1Z"/><path fill="#c1c1c1" d="M157.1 202.1L158.9 203.9L183.4 189.8L182.7 187.3Z"/><path fill="#b7b7b7" d="M182.7 187.3L183.4 189.8L208.5 189.8L208.5 187.3ZM80.7 253.5L83.5 253.5L83.5 212L80.7 211.2Z"/><path fill="#e2e2e2" d="M139.5 253.5L142.3 253.5L142.3 227.7L139.5 226.9Z"/><path fill="#bdbdbd" d="M80.7 211.2L83.5 212L114.1 159.1L112 157Z"/><path fill="#d7d7d7" d="M139.5 226.9L142.3 227.7L157.1 202.1L155 200Z"/><path fill="#c7c7c7" d="M112 157L114.1 159.1L167 128.5L166.2 125.7Z"/><path fill="#cacaca" d="M155 200L157.1 202.1L182.7 187.3L181.9 184.5Z"/><path fill="#d4d4d4" d="M166.2 125.7L167 128.5L208.5 128.5L208.5 125.7Z"/><path fill="#bfbfbf" d="M181.9 184.5L182.7 187.3L208.5 187.3L208.5 184.5ZM83.5 253.5L86.5 253.5L86.5 212.8L83.5 212Z"/><path fill="#c5c5c5" d="M83.5 212L86.5 212.8L116.3 161.3L114.1 159.1Z"/><path fill="#d0d0d0" d="M114.1 159.1L116.3 161.3L167.8 131.5L167 128.5Z"/><path fill="#dddddd" d="M167 128.5L167.8 131.5L208.5 131.5L208.5 128.5Z"/><path fill="#ececec" d="M136.5 253.5L139.5 253.5L139.5 226.9L136.5 226.1Z"/><path fill="#e0e0e0" d="M136.5 226.1L139.5 226.9L155 200L152.8 197.8Z"/><path fill="#d3d3d3" d="M152.8 197.8L155 200L181.9 184.5L181.1 181.5Z"/><path fill="#c7c7c7" d="M181.1 181.5L181.9 184.5L208.5 184.5L208.5 181.5Z"/><path fill="#c8c8c8" d="M86.5 253.5L89.8 253.5L89.8 213.6L86.5 212.8Z"/><path fill="#cecece" d="M86.5 212.8L89.8 213.6L118.6 163.6L116.3 161.3Z"/><path fill="#d9d9d9" d="M116.3 161.3L118.6 163.6L168.6 134.8L167.8 131.5Z"/><path fill="#e7e7e7" d="M167.8 131.5L168.6 134.8L208.5 134.8L208.5 131.5Z"/><path fill="#f6f6f6" d="M133.2 253.5L136.5 253.5L136.5 226.1L133.2 225.3Z"/><path fill="#eaeaea" d="M133.2 225.3L136.5 226.1L152.8 197.8L150.5 195.5Z"/><path fill="#dcdcdc" d="M150.5 195.5L152.8 197.8L181.1 181.5L180.3 178.2Z"/><path fill="#d0d0d0" d="M180.3 178.2L181.1 181.5L208.5 181.5L208.5 178.2Z"/><path fill="#d1d1d1" d="M89.8 253.5L93.1 253.5L93.1 214.5L89.8 213.6Z"/><path fill="#ffffff" d="M129.9 253.5L133.2 253.5L133.2 225.3L129.9 224.4Z"/><path fill="#d8d8d8" d="M89.8 213.6L93.1 214.5L121.1 166.1L118.6 163.6Z"/><path fill="#f3f3f3" d="M129.9 224.4L133.2 225.3L150.5 195.5L148 193Z"/><path fill="#e3e3e3" d="M118.6 163.6L121.1 166.1L169.5 138.1L168.6 134.8Z"/><path fill="#e6e6e6" d="M148 193L150.5 195.5L180.3 178.2L179.4 174.9Z"/><path fill="#f0f0f0" d="M168.6 134.8L169.5 138.1L208.5 138.1L208.5 134.8Z"/><path fill="#dadada" d="M179.4 174.9L180.3 178.2L208.5 178.2L208.5 174.9Z"/><path fill="#dbdbdb" d="M93.1 253.5L96.6 253.5L96.6 215.5L93.1 214.5Z"/><path fill="#e1e1e1" d="M93.1 214.5L96.6 215.5L123.7 168.7L121.1 166.1Z"/><path fill="#ececec" d="M121.1 166.1L123.7 168.7L170.5 141.6L169.5 138.1Z"/><path fill="#f9f9f9" d="M169.5 138.1L170.5 141.6L208.5 141.6L208.5 138.1Z"/><path fill="#ffffff" d="M126.4 253.5L129.9 253.5L129.9 224.4L126.4 223.4Z"/><path fill="#fbfbfb" d="M126.4 223.4L129.9 224.4L148 193L145.4 190.4Z"/><path fill="#efefef" d="M145.4 190.4L148 193L179.4 174.9L178.4 171.4Z"/><path fill="#e4e4e4" d="M178.4 171.4L179.4 174.9L208.5 174.9L208.5 171.4Z"/><path fill="#e5e5e5" d="M96.6 253.5L100.2 253.5L100.2 216.4L96.6 215.5Z"/><path fill="#ffffff" d="M122.8 253.5L126.4 253.5L126.4 223.4L122.8 222.5Z"/><path fill="#ebebeb" d="M96.6 215.5L100.2 216.4L126.3 171.3L123.7 168.7Z"/><path fill="#ffffff" d="M122.8 222.5L126.4 223.4L145.4 190.4L142.8 187.8Z"/><path fill="#f4f4f4" d="M123.7 168.7L126.3 171.3L171.4 145.2L170.5 141.6Z"/><path fill="#f7f7f7" d="M142.8 187.8L145.4 190.4L178.4 171.4L177.5 167.8Z"/><path fill="#ffffff" d="M170.5 141.6L171.4 145.2L208.5 145.2L208.5 141.6Z"/><path fill="#ededed" d="M177.5 167.8L178.4 171.4L208.5 171.4L208.5 167.8Z"/><path fill="#efefef" d="M100.2 253.5L103.9 253.5L103.9 217.4L100.2 216.4Z"/><path fill="#ffffff" d="M119.1 253.5L122.8 253.5L122.8 222.5L119.1 221.5Z"/><path fill="#f4f4f4" d="M100.2 216.4L103.9 217.4L129 174L126.3 171.3Z"/><path fill="#ffffff" d="M119.1 221.5L122.8 222.5L142.8 187.8L140.1 185.1Z"/><path fill="#fcfcfc" d="M126.3 171.3L129 174L172.4 148.9L171.4 145.2Z"/><path fill="#fefefe" d="M140.1 185.1L142.8 187.8L177.5 167.8L176.5 164.1Z"/><path fill="#ffffff" d="M171.4 145.2L172.4 148.9L208.5 148.9L208.5 145.2Z"/><path fill="#f6f6f6" d="M176.5 164.1L177.5 167.8L208.5 167.8L208.5 164.1Z"/><path fill="#f9f9f9" d="M103.9 253.5L107.7 253.5L107.7 218.4L103.9 217.4Z"/><path fill="#ffffff" d="M115.3 253.5L119.1 253.5L119.1 221.5L115.3 220.5Z"/><path fill="#fcfcfc" d="M103.9 217.4L107.7 218.4L131.8 176.8L129 174Z"/><path fill="#ffffff" d="M115.3 220.5L119.1 221.5L140.1 185.1L137.3 182.3ZM129 174L131.8 176.8L173.4 152.7L172.4 148.9ZM137.3 182.3L140.1 185.1L176.5 164.1L175.5 160.3ZM172.4 148.9L173.4 152.7L208.5 152.7L208.5 148.9Z"/><path fill="#fdfdfd" d="M175.5 160.3L176.5 164.1L208.5 164.1L208.5 160.3Z"/><path fill="#ffffff" d="M107.7 253.5L111.5 253.5L111.5 219.5L107.7 218.4ZM111.5 253.5L115.3 253.5L115.3 220.5L111.5 219.5ZM107.7 218.4L111.5 219.5L134.5 179.5L131.8 176.8ZM111.5 219.5L115.3 220.5L137.3 182.3L134.5 179.5ZM131.8 176.8L134.5 179.5L174.5 156.5L173.4 152.7ZM134.5 179.5L137.3 182.3L175.5 160.3L174.5 156.5ZM173.4 152.7L174.5 156.5L208.5 156.5L208.5 152.7ZM174.5 156.5L175.5 160.3L208.5 160.3L208.5 156.5Z"/><path d="M68 253.5L68.2 253.5L68.4 253.5L68.7 253.5L69 253.5L69.5 253.5L70 253.5L70.6 253.5L71.3 253.5L72.1 253.5L72.9 253.5L73.8 253.5L74.8 253.5L75.9 253.5L77 253.5L78.2 253.5L79.4 253.5L80.7 253.5L82.1 253.5L83.5 253.5L85 253.5L86.5 253.5L88.1 253.5L89.8 253.5L91.4 253.5L93.1 253.5L94.9 253.5L96.6 253.5L98.4 253.5L100.2 253.5L102.1 253.5L103.9 253.5L105.8 253.5L107.7 253.5L109.6 253.5L111.5 253.5L113.4 253.5L115.3 253.5L117.2 253.5L119.1 253.5L120.9 253.5L122.8 253.5L124.6 253.5L126.4 253.5L128.1 253.5L129.9 253.5L131.6 253.5L133.2 253.5L134.9 253.5L136.5 253.5L138 253.5L139.5 253.5L140.9 253.5L142.3 253.5L143.6 253.5L144.8 253.5L146 253.5L147.1 253.5L148.2 253.5L149.2 253.5L150.1 253.5L150.9 253.5L151.7 253.5L152.4 253.5L153 253.5L153.5 253.5L154 253.5L154.3 253.5L154.6 253.5L154.8 253.5L155 253.5M68 243.2L68.2 243.2L68.4 243.2L68.7 243.2L69 243.2L69.5 243.2L70 243.2L70.6 243.2L71.3 243.2L72.1 243.2L72.9 243.2L73.8 243.2L74.8 243.2L75.9 243.2L77 243.2L78.2 243.2L79.4 243.2L80.7 243.2L82.1 243.2L83.5 243.2L85 243.2L86.5 243.2L88.1 243.2L89.8 243.2L91.4 243.2L93.1 243.2L94.9 243.2L96.6 243.2L98.4 243.2L100.2 243.2L102.1 243.2L103.9 243.2L105.8 243.2L107.7 243.2L109.6 243.2L111.5 243.2L113.4 243.2L115.3 243.2L117.2 243.2L119.1 243.2L120.9 243.2L122.8 243.2L124.6 243.2L126.4 243.2L128.1 243.2L129.9 243.2L131.6 243.2L133.2 243.2L134.9 243.2L136.5 243.2L138 243.2L139.5 243.2L140.9 243.2L142.3 243.2L143.6 243.2L144.8 243.2L146 243.2L147.1 243.2L148.2 243.2L149.2 243.2L150.1 243.2L150.9 243.2L151.7 243.2L152.4 243.2L153 243.2L153.5 243.2L154 243.2L154.3 243.2L154.6 243.2L154.8 243.2L155 243.2M68 207.8L68.2 207.8L68.4 207.9L68.7 208L69 208.1L69.5 208.2L70 208.3L70.6 208.5L71.3 208.7L72.1 208.9L72.9 209.1L73.8 209.4L74.8 209.6L75.9 209.9L77 210.2L78.2 210.5L79.4 210.9L80.7 211.2L82.1 211.6L83.5 212L85 212.4L86.5 212.8L88.1 213.2L89.8 213.6L91.4 214.1L93.1 214.5L94.9 215L96.6 215.5L98.4 216L100.2 216.4L102.1 216.9L103.9 217.4L105.8 217.9L107.7 218.4L109.6 218.9L111.5 219.5L113.4 220L115.3 220.5L117.2 221L119.1 221.5L120.9 222L122.8 222.5L124.6 223L126.4 223.4L128.1 223.9L129.9 224.4L131.6 224.8L133.2 225.3L134.9 225.7L136.5 226.1L138 226.6L139.5 226.9L140.9 227.3L142.3 227.7L143.6 228L144.8 228.4L146 228.7L147.1 229L148.2 229.3L149.2 229.6L150.1 229.8L150.9 230L151.7 230.2L152.4 230.4L153 230.6L153.5 230.7L154 230.8L154.3 230.9L154.6 231L154.8 231.1L155 231.1M102.7 147.7L102.7 147.7L102.8 147.8L103 148L103.2 148.2L103.5 148.5L103.8 148.8L104.2 149.2L104.6 149.6L105.1 150.1L105.7 150.7L106.3 151.3L107 152L107.7 152.7L108.5 153.5L109.3 154.3L110.1 155.1L111.1 156.1L112 157L113 158L114.1 159.1L115.2 160.2L116.3 161.3L117.4 162.4L118.6 163.6L119.8 164.8L121.1 166.1L122.4 167.4L123.7 168.7L125 170L126.3 171.3L127.7 172.7L129 174L130.4 175.4L131.8 176.8L133.2 178.2L134.5 179.5L135.9 180.9L137.3 182.3L138.7 183.7L140.1 185.1L141.4 186.4L142.8 187.8L144.1 189.1L145.4 190.4L146.7 191.7L148 193L149.2 194.2L150.5 195.5L151.7 196.7L152.8 197.8L153.9 198.9L155 200L156.1 201.1L157.1 202.1L158 203L158.9 203.9L159.8 204.8L160.6 205.6L161.4 206.4L162.1 207.1L162.8 207.8L163.4 208.4L164 209L164.5 209.5L164.9 209.9L165.3 210.3L165.6 210.6L165.9 210.9L166.1 211.1L166.3 211.3L166.4 211.4M162.8 113L162.8 113.2L162.9 113.4L163 113.7L163.1 114L163.2 114.5L163.3 115L163.5 115.6L163.7 116.3L163.9 117.1L164.1 117.9L164.4 118.8L164.6 119.8L164.9 120.9L165.2 122L165.5 123.2L165.9 124.4L166.2 125.7L166.6 127.1L167 128.5L167.4 130L167.8 131.5L168.2 133.1L168.6 134.8L169.1 136.4L169.5 138.1L170 139.9L170.5 141.6L171 143.4L171.4 145.2L171.9 147.1L172.4 148.9L172.9 150.8L173.4 152.7L173.9 154.6L174.5 156.5L175 158.4L175.5 160.3L176 162.2L176.5 164.1L177 165.9L177.5 167.8L178 169.6L178.4 171.4L178.9 173.1L179.4 174.9L179.8 176.6L180.3 178.2L180.7 179.9L181.1 181.5L181.6 183L181.9 184.5L182.3 185.9L182.7 187.3L183 188.6L183.4 189.8L183.7 191L184 192.1L184.3 193.2L184.6 194.2L184.8 195.1L185 195.9L185.2 196.7L185.4 197.4L185.6 198L185.7 198.5L185.8 199L185.9 199.3L186 199.6L186.1 199.8L186.1 200M208.5 113L208.5 113.2L208.5 113.4L208.5 113.7L208.5 114L208.5 114.5L208.5 115L208.5 115.6L208.5 116.3L208.5 117.1L208.5 117.9L208.5 118.8L208.5 119.8L208.5 120.9L208.5 122L208.5 123.2L208.5 124.4L208.5 125.7L208.5 127.1L208.5 128.5L208.5 130L208.5 131.5L208.5 133.1L208.5 134.8L208.5 136.4L208.5 138.1L208.5 139.9L208.5 141.6L208.5 143.4L208.5 145.2L208.5 147.1L208.5 148.9L208.5 150.8L208.5 152.7L208.5 154.6L208.5 156.5L208.5 158.4L208.5 160.3L208.5 162.2L208.5 164.1L208.5 165.9L208.5 167.8L208.5 169.6L208.5 171.4L208.5 173.1L208.5 174.9L208.5 176.6L208.5 178.2L208.5 179.9L208.5 181.5L208.5 183L208.5 184.5L208.5 185.9L208.5 187.3L208.5 188.6L208.5 189.8L208.5 191L208.5 192.1L208.5 193.2L208.5 194.2L208.5 195.1L208.5 195.9L208.5 196.7L208.5 197.4L208.5 198L208.5 198.5L208.5 199L208.5 199.3L208.5 199.6L208.5 199.8L208.5 200M198.2 113L198.2 113.2L198.2 113.4L198.2 113.7L198.2 114L198.2 114.5L198.2 115L198.2 115.6L198.2 116.3L198.2 117.1L198.2 117.9L198.2 118.8L198.2 119.8L198.2 120.9L198.2 122L198.2 123.2L198.2 124.4L198.2 125.7L198.2 127.1L198.2 128.5L198.2 130L198.2 131.5L198.2 133.1L198.2 134.8L198.2 136.4L198.2 138.1L198.2 139.9L198.2 141.6L198.2 143.4L198.2 145.2L198.2 147.1L198.2 148.9L198.2 150.8L198.2 152.7L198.2 154.6L198.2 156.5L198.2 158.4L198.2 160.3L198.2 162.2L198.2 164.1L198.2 165.9L198.2 167.8L198.2 169.6L198.2 171.4L198.2 173.1L198.2 174.9L198.2 176.6L198.2 178.2L198.2 179.9L198.2 181.5L198.2 183L198.2 184.5L198.2 185.9L198.2 187.3L198.2 188.6L198.2 189.8L198.2 191L198.2 192.1L198.2 193.2L198.2 194.2L198.2 195.1L198.2 195.9L198.2 196.7L198.2 197.4L198.2 198L198.2 198.5L198.2 199L198.2 199.3L198.2 199.6L198.2 199.8L198.2 200" stroke="#0000ff" stroke-width="1" fill="none"/><path d="M67.5 253.5V259.5H155.5V253.5 M155 242.5H197.5V200 M197.5 242.5L167 212" stroke="#ff0000" fill="none"/><text x="77" y="152">S1=LAP</text><text x="85" y="184">C1=SWAGE 400</text><text x="162" y="161">C3=SWAGE 400</text><text x="62" y="280">C2=SWAGE 400</text><text x="107" y="264">A</text><text x="182" y="228">B</text></svg>
<div style="left:895px;top:55px;width:2px;height:526px;background:#d6d6d6;"></div>
<div style="left:544px;top:579px;width:353px;height:2px;background:#d8d8d8;"></div>
<div style="left:542px;top:53px;width:353px;height:526px;background:#8c8c8c;"></div>
<div style="left:543px;top:54px;width:351px;height:524px;background:#fff;"></div>
<div style="left:544px;top:55px;width:349px;height:522px;background:#f2f2f0;"></div>
<div style="left:545px;top:55px;width:348px;height:522px;background:#f6f6f2;"></div>
<div style="left:546px;top:55px;width:347px;height:522px;background:#ece9d8;"></div>
<div style="left:586px;top:35px;width:64px;height:19px;box-sizing:border-box;border:1px solid #9098a8;border-bottom:1px solid #8c8c8c;background:linear-gradient(#f8f8f8 0%,#ececec 50%,#d0d0d0 100%);box-shadow:inset 1px 1px 0 #fff"></div>
<span class="t" style="left:591px;top:39px;letter-spacing:-0.45px;">Dimensions</span>
<div style="left:652px;top:35px;width:47px;height:19px;box-sizing:border-box;border:1px solid #9098a8;border-bottom:1px solid #8c8c8c;background:linear-gradient(#f8f8f8 0%,#ececec 50%,#d0d0d0 100%);box-shadow:inset 1px 1px 0 #fff"></div>
<span class="t" style="left:656px;top:39px;letter-spacing:0.15px;">Options</span>
<div style="left:701px;top:35px;width:65px;height:19px;box-sizing:border-box;border:1px solid #9098a8;border-bottom:1px solid #8c8c8c;background:linear-gradient(#f8f8f8 0%,#ececec 50%,#d0d0d0 100%);box-shadow:inset 1px 1px 0 #fff"></div>
<span class="t" style="left:705px;top:39px;">Connectors</span>
<div style="left:767px;top:35px;width:41px;height:19px;box-sizing:border-box;border:1px solid #9098a8;border-bottom:1px solid #8c8c8c;background:linear-gradient(#f8f8f8 0%,#ececec 50%,#d0d0d0 100%);box-shadow:inset 1px 1px 0 #fff"></div>
<span class="t" style="left:771px;top:39px;letter-spacing:0.3px;">Help</span>
<div style="left:542px;top:33px;width:45px;height:22px;box-sizing:border-box;border:1px solid #8890a8;border-bottom:none;background:#fff"></div>
<span class="t" style="left:549px;top:37px;letter-spacing:0.3px;color:#0a246a">Item</span>
<span class="t" style="left:611px;top:60px;letter-spacing:0.17px;">Item No</span>
<div class="fld" style="left:657px;top:59px;width:212px;height:21px"></div>
<span class="t" style="left:662px;top:63px;">6</span>
<span class="t" style="left:631px;top:85px;letter-spacing:1px;">Qty</span>
<div class="fld" style="left:657px;top:84px;width:212px;height:21px"></div>
<span class="t" style="left:662px;top:88px;">1</span>
<svg style="left:856px;top:88px" width="7" height="4" viewBox="0 0 7 4" shape-rendering="crispEdges"><path d="M0 3h7v1h-7z M1 2h1v1h-1z M5 2h1v1h-1z M2 1h1v1h-1z M4 1h1v1h-1z M3 0h1v1h-1z" fill="#000"/></svg>
<svg style="left:856px;top:97px" width="7" height="4" viewBox="0 0 7 4" shape-rendering="crispEdges"><path d="M0 0h7v1h-7z M1 1h1v1h-1z M5 1h1v1h-1z M2 2h1v1h-1z M4 2h1v1h-1z M3 3h1v1h-1z" fill="#000"/></svg>
<div style="left:657px;top:113px;width:13px;height:13px;box-sizing:border-box;border:1px solid #8fb8dc;background:linear-gradient(135deg,#e4ecf4 0%,#fafcfe 60%,#ffffff 100%)"></div>
<span class="t" style="left:672px;top:113px;letter-spacing:-0.1px;">Double Wall</span>
<span class="t u" style="left:611px;top:135px;letter-spacing:0.08px;">Materia<span style="letter-spacing:0">l</span></span>
<div class="fld" style="left:657px;top:134px;width:140px;height:21px"></div>
<span class="t" style="left:660px;top:138px;letter-spacing:-0.67px;">GALVANISED</span>
<svg style="left:784px;top:142px" width="7" height="4" viewBox="0 0 7 4" shape-rendering="crispEdges"><path d="M0 0h7v1h-7z M1 1h1v1h-1z M5 1h1v1h-1z M2 2h1v1h-1z M4 2h1v1h-1z M3 3h1v1h-1z" fill="#000"/></svg>
<div class="fld" style="left:801px;top:134px;width:68px;height:21px"></div>
<span class="t" style="left:804px;top:138px;letter-spacing:0.33px;">0.80</span>
<svg style="left:856px;top:142px" width="7" height="4" viewBox="0 0 7 4" shape-rendering="crispEdges"><path d="M0 0h7v1h-7z M1 1h1v1h-1z M5 1h1v1h-1z M2 2h1v1h-1z M4 2h1v1h-1z M3 3h1v1h-1z" fill="#000"/></svg>
<svg style="left:877px;top:138px" width="14" height="12" viewBox="0 0 14 12" shape-rendering="crispEdges"><rect x="0" y="5" width="9" height="1" fill="#000"/><rect x="0" y="6" width="9" height="1" fill="#808000"/><rect x="0" y="7" width="9" height="1" fill="#000"/><rect x="0" y="8" width="9" height="1" fill="#808000"/><rect x="0" y="9" width="9" height="1" fill="#000"/><rect x="0" y="10" width="9" height="1" fill="#808000"/><rect x="0" y="11" width="9" height="1" fill="#000"/><rect x="0" y="6" width="1" height="1" fill="#ffff00"/><rect x="0" y="8" width="1" height="1" fill="#ffff00"/><rect x="0" y="10" width="1" height="1" fill="#ffff00"/><rect x="7" y="3" width="1" height="2" fill="#000"/><rect x="7" y="1" width="1" height="2" fill="#808000"/><rect x="8" y="0" width="4" height="1" fill="#808000"/><rect x="8" y="1" width="4" height="1" fill="#ffff00" opacity="0.0"/><rect x="12" y="1" width="1" height="3" fill="#808000"/><rect x="13" y="2" width="1" height="5" fill="#000"/><rect x="12" y="4" width="1" height="3" fill="#808000"/></svg>
<span class="t u" style="left:589px;top:160px;letter-spacing:-0.05px;">Specificatio<span style="letter-spacing:0">n</span></span>
<div class="fld" style="left:657px;top:159px;width:212px;height:21px"></div>
<span class="t" style="left:660px;top:163px;letter-spacing:-0.25px;">DW144-LV</span>
<svg style="left:856px;top:167px" width="7" height="4" viewBox="0 0 7 4" shape-rendering="crispEdges"><path d="M0 0h7v1h-7z M1 1h1v1h-1z M5 1h1v1h-1z M2 2h1v1h-1z M4 2h1v1h-1z M3 3h1v1h-1z" fill="#000"/></svg>
<svg style="left:877px;top:163px" width="14" height="12" viewBox="0 0 14 12" shape-rendering="crispEdges"><rect x="0" y="5" width="9" height="1" fill="#000"/><rect x="0" y="6" width="9" height="1" fill="#ff0000"/><rect x="0" y="7" width="9" height="1" fill="#000"/><rect x="0" y="8" width="9" height="1" fill="#ff0000"/><rect x="0" y="9" width="9" height="1" fill="#000"/><rect x="0" y="10" width="9" height="1" fill="#ff0000"/><rect x="0" y="11" width="9" height="1" fill="#000"/><rect x="0" y="6" width="1" height="1" fill="#ff0000"/><rect x="0" y="8" width="1" height="1" fill="#ff0000"/><rect x="0" y="10" width="1" height="1" fill="#ff0000"/><rect x="7" y="3" width="1" height="2" fill="#000"/><rect x="7" y="1" width="1" height="2" fill="#ff0000"/><rect x="8" y="0" width="4" height="1" fill="#ff0000"/><rect x="8" y="1" width="4" height="1" fill="#ff0000" opacity="0.0"/><rect x="12" y="1" width="1" height="3" fill="#ff0000"/><rect x="13" y="2" width="1" height="5" fill="#000"/><rect x="12" y="4" width="1" height="3" fill="#ff0000"/></svg>
<span class="t u" style="left:602px;top:185px;letter-spacing:0.2px;">Insulatio<span style="letter-spacing:0">n</span></span>
<div class="fld" style="left:657px;top:184px;width:68px;height:21px"></div>
<span class="t" style="left:660px;top:188px;letter-spacing:1px;">Off</span>
<svg style="left:712px;top:192px" width="7" height="4" viewBox="0 0 7 4" shape-rendering="crispEdges"><path d="M0 0h7v1h-7z M1 1h1v1h-1z M5 1h1v1h-1z M2 2h1v1h-1z M4 2h1v1h-1z M3 3h1v1h-1z" fill="#000"/></svg>
<div class="fld" style="left:729px;top:184px;width:140px;height:21px"></div>
<span class="t" style="left:732px;top:188px;color:#aca899">None</span>
<svg style="left:856px;top:192px" width="7" height="4" viewBox="0 0 7 4" shape-rendering="crispEdges"><path d="M0 0h7v1h-7z M1 1h1v1h-1z M5 1h1v1h-1z M2 2h1v1h-1z M4 2h1v1h-1z M3 3h1v1h-1z" fill="#000"/></svg>
<div style="left:657px;top:213px;width:13px;height:13px;box-sizing:border-box;border:1px solid #8fb8dc;background:linear-gradient(135deg,#e4ecf4 0%,#fafcfe 60%,#ffffff 100%)"></div>
<span class="t" style="left:672px;top:213px;letter-spacing:0.13px;">Centreline Input</span>
<div style="left:540px;top:33px;width:1px;height:548px;background:#f6f3e4;"></div>
<div style="left:4px;top:581px;width:893px;height:1px;background:#b8cae6;"></div>
<div style="left:4px;top:582px;width:893px;height:9px;background:linear-gradient(#ffffff,#e9edf7);"></div>
<div style="left:4px;top:591px;width:893px;height:29px;background:linear-gradient(#d5daee,#e1e6f5);"></div>
<div style="left:4px;top:619px;width:893px;height:1px;background:#e8ebfa;"></div>
<div style="left:4px;top:620px;width:893px;height:1px;background:#b0b8d4;"></div>
<div style="left:0px;top:621px;width:899px;height:1px;background:#ece9d8;"></div>
<div style="left:0px;top:622px;width:899px;height:1px;background:#dedac8;"></div>
<div style="left:0px;top:623px;width:899px;height:1px;background:#aca899;"></div>
<div style="left:0px;top:624px;width:899px;height:1px;background:#716f64;"></div>
<div style="left:4px;top:588px;width:30px;height:3px;background:#d5daee;"></div>
<div style="left:4px;top:610px;width:30px;height:2px;background:#e6e9f7;"></div>
<div style="left:4px;top:612px;width:30px;height:7px;background:#d9def0;"></div>
<span class="t" style="left:6px;top:595px;letter-spacing:-0.05px;">Adding Pattern To Job</span>
<div class="sb" style="left:659px;top:583px;width:58px;height:38px"></div>
<span class="t" style="left:668px;top:596px;letter-spacing:0.17px;">Develop</span>
<div class="sb" style="left:719px;top:583px;width:58px;height:38px"></div>
<span class="t" style="left:729px;top:596px;">Redraw</span>
<div class="sb" style="left:779px;top:583px;width:58px;height:38px"></div>
<span class="t" style="left:791px;top:596px;letter-spacing:0.2px;">Cancel</span>
<div class="sb" style="left:839px;top:583px;width:58px;height:38px"></div>
<span class="t" style="left:851px;top:596px;letter-spacing:0.4px;">Accept</span>
</body></html>
